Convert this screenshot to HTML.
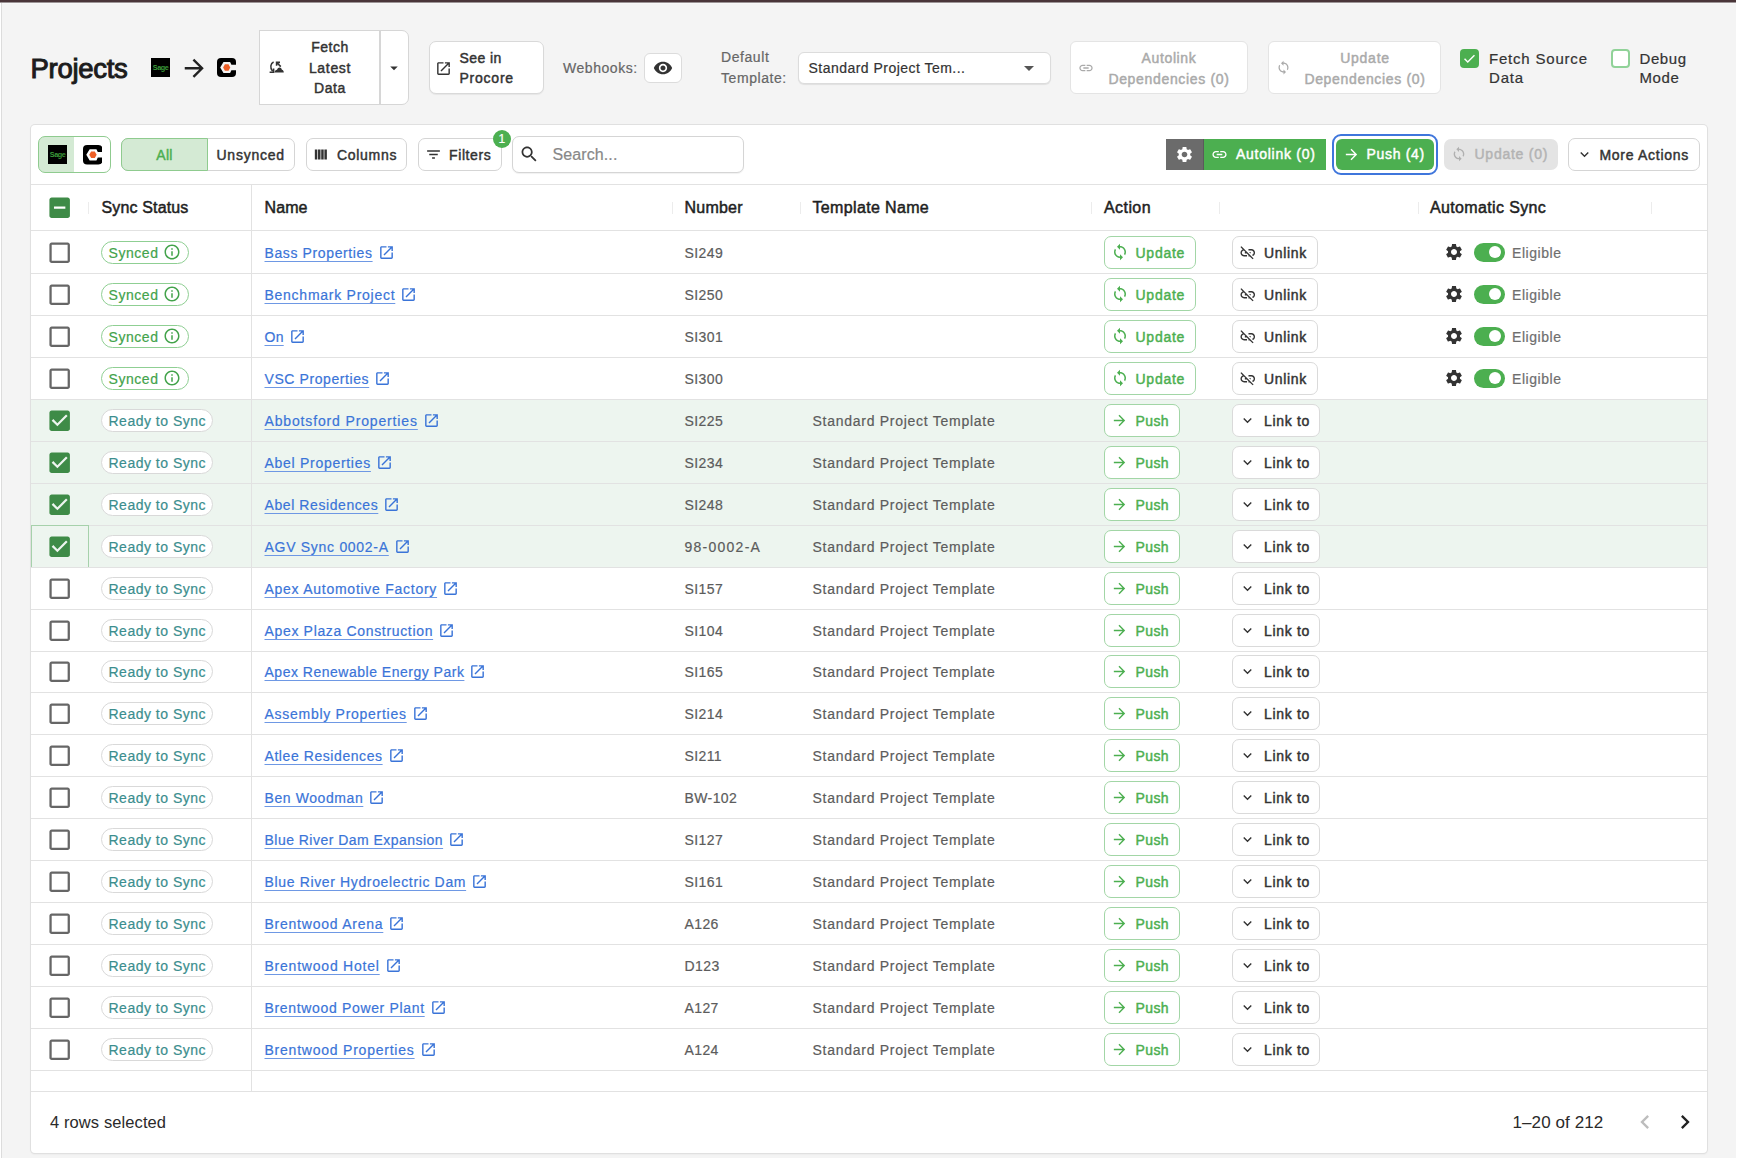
<!DOCTYPE html><html><head><meta charset="utf-8"><style>
html,body{margin:0;padding:0;}
body{width:1740px;height:1162px;position:relative;overflow:hidden;background:#fff;font-family:"Liberation Sans", sans-serif;}
.a{position:absolute;box-sizing:border-box;}
.t{position:absolute;white-space:nowrap;}
svg.a{display:block;}
</style></head><body>
<div class="a" style="left:2px;top:3px;width:1734px;height:1155px;background:#f4f4f4;"></div>
<div class="a" style="left:0px;top:0px;width:1736px;height:2px;background:#4a3539;"></div>
<div class="a" style="left:0px;top:2px;width:1736px;height:1px;background:#9c9496;"></div>
<div class="a" style="left:2px;top:3px;width:1734px;height:1px;background:#f8f8f8;"></div>
<div class="a" style="left:1px;top:3px;width:1px;height:1155px;background:#dcdcdc;"></div>
<div class="t" style="left:30.5px;top:54.72px;font-size:27.5px;line-height:27.5px;color:#1c1c1c;-webkit-text-stroke:0.77px #1c1c1c;letter-spacing:-0.3px;-webkit-text-stroke:1.0px #1c1c1c;">Projects</div>
<svg class="a" style="left:151px;top:58px;" width="19" height="19" viewBox="0 0 19 19"><rect width="19" height="19" fill="#000"/><text x="9.5" y="11.6" text-anchor="middle" font-family="Liberation Sans" font-size="7.2" font-weight="bold" fill="#3a9a3a" letter-spacing="-0.45">Sage</text></svg>
<svg class="a" style="left:179.5px;top:53.5px;" width="28.5" height="28.5" viewBox="0 0 24 24"><path d="M12 4l-1.41 1.41L16.17 11H4v2h12.17l-5.58 5.59L12 20l8-8z" fill="#222"/></svg>
<svg class="a" style="left:217px;top:58px;" width="19" height="19" viewBox="0 0 19 19"><rect width="19" height="19" rx="4" fill="#000"/><polygon points="3.2,9.5 6.5,4.1 13.1,4.1 14.4,6.8 19,6.8 19,12.2 14.4,12.2 13.1,15.0 6.5,15.0" fill="#f4f4f4"/><polygon points="6.1,9.5 7.9,6.3 11.5,6.3 13.3,9.5 11.5,12.7 7.9,12.7" fill="#ee5f26"/></svg>
<div class="a" style="left:259px;top:30px;width:121px;height:75px;background:#fff;border:1px solid #d6d6d6;border-right:none;"></div>
<div class="a" style="left:379px;top:30px;width:30px;height:75px;background:#fff;border:1px solid #d6d6d6;border-radius:0 7px 7px 0;"></div>
<div class="a" style="left:379px;top:30px;width:2px;height:75px;background:#d6d6d6;"></div>
<div class="t" style="left:300px;top:39.65px;font-size:14px;line-height:14px;color:#333;-webkit-text-stroke:0.45px #333;letter-spacing:0.48px;width:60px;text-align:center;">Fetch</div>
<div class="t" style="left:300px;top:60.65px;font-size:14px;line-height:14px;color:#333;-webkit-text-stroke:0.45px #333;letter-spacing:0.68px;width:60px;text-align:center;">Latest</div>
<div class="t" style="left:300px;top:81.15px;font-size:14px;line-height:14px;color:#333;-webkit-text-stroke:0.45px #333;letter-spacing:0.6px;width:60px;text-align:center;">Data</div>
<svg class="a" style="left:269px;top:61px;" width="16" height="13" viewBox="0 0 16 13"><path d="M4.6 1.0 C1.6 2.4 0.6 6.6 3.6 10.2" stroke="#333" stroke-width="1.5" fill="none"/><path d="M0.6 11.2 H4.6 V7.4" stroke="#333" stroke-width="1.6" fill="none"/><path d="M7.6 4.8 V1.4 H11.0 M7.9 1.7 L11.8 5.6" stroke="#333" stroke-width="1.6" fill="none"/><path d="M5.6 11.6 C5.6 9.8 6.8 8.8 8.0 8.7 C8.6 7.3 9.6 6.6 10.4 6.6 C11.6 6.6 12.6 7.4 12.9 8.7 C14.1 8.9 14.8 10.0 14.8 11.6 Z" fill="#333"/></svg>
<svg class="a" style="left:385px;top:58.5px;" width="18" height="18" viewBox="0 0 24 24"><path d="M7 10l5 5 5-5z" fill="#333"/></svg>
<div class="a" style="left:429px;top:41px;width:115px;height:53px;background:#fff;border:1px solid #d9d9d9;border-radius:7px;box-shadow:0 1px 1px rgba(0,0,0,0.06);"></div>
<svg class="a" style="left:435px;top:60px;" width="17" height="17" viewBox="0 0 24 24"><path d="M19 19H5V5h7V3H5c-1.11 0-2 .9-2 2v14c0 1.1.89 2 2 2h14c1.1 0 2-.9 2-2v-7h-2v7zM14 3v2h3.59l-9.83 9.83 1.41 1.41L19 6.41V10h2V3h-7z" fill="#333"/></svg>
<div class="t" style="left:459.5px;top:50.65px;font-size:14px;line-height:14px;color:#333;-webkit-text-stroke:0.45px #333;letter-spacing:0.43px;">See in</div>
<div class="t" style="left:459.5px;top:71.15px;font-size:14px;line-height:14px;color:#333;-webkit-text-stroke:0.45px #333;letter-spacing:0.77px;">Procore</div>
<div class="t" style="left:563px;top:61.15px;font-size:14px;line-height:14px;font-weight:normal;color:#666;letter-spacing:0.55px;-webkit-text-stroke:0.2px #666;">Webhooks:</div>
<div class="a" style="left:644px;top:52.5px;width:38px;height:30px;background:#fff;border:1px solid #dcdcdc;border-radius:6px;"></div>
<svg class="a" style="left:653px;top:58px;" width="20" height="20" viewBox="0 0 24 24"><path d="M12 4.5C7 4.5 2.73 7.61 1 12c1.73 4.39 6 7.5 11 7.5s9.27-3.11 11-7.5c-1.73-4.39-6-7.5-11-7.5zM12 17c-2.76 0-5-2.24-5-5s2.24-5 5-5 5 2.24 5 5-2.24 5-5 5zm0-8c-1.66 0-3 1.34-3 3s1.34 3 3 3 3-1.34 3-3-1.34-3-3-3z" fill="#333"/></svg>
<div class="t" style="left:721px;top:50.35px;font-size:14px;line-height:14px;font-weight:normal;color:#666;letter-spacing:0.57px;-webkit-text-stroke:0.2px #666;">Default</div>
<div class="t" style="left:721px;top:71.15px;font-size:14px;line-height:14px;font-weight:normal;color:#666;letter-spacing:0.57px;-webkit-text-stroke:0.2px #666;">Template:</div>
<div class="a" style="left:798px;top:52px;width:253px;height:32px;background:#fff;border:1px solid #dcdcdc;border-radius:6px;box-shadow:0 1px 1px rgba(0,0,0,0.08);"></div>
<div class="t" style="left:808.5px;top:60.95px;font-size:14px;line-height:14px;font-weight:normal;color:#333;letter-spacing:0.47px;-webkit-text-stroke:0.2px #333;">Standard Project Tem...</div>
<svg class="a" style="left:1017px;top:56px;" width="24" height="24" viewBox="0 0 24 24"><path d="M7 10l5 5 5-5z" fill="#555"/></svg>
<div class="a" style="left:1070px;top:41px;width:178px;height:53px;background:#fff;border:1px solid #e4e4e4;border-radius:6px;"></div>
<svg class="a" style="left:1078px;top:60px;" width="16" height="16" viewBox="0 0 24 24"><path d="M3.9 12c0-1.71 1.39-3.1 3.1-3.1h4V7H7c-2.76 0-5 2.24-5 5s2.24 5 5 5h4v-1.9H7c-1.71 0-3.1-1.39-3.1-3.1zM8 13h8v-2H8v2zm9-6h-4v1.9h4c1.71 0 3.1 1.39 3.1 3.1s-1.39 3.1-3.1 3.1h-4V17h4c2.76 0 5-2.24 5-5s-2.24-5-5-5z" fill="#aaa"/></svg>
<div class="t" style="left:1100px;top:50.95px;font-size:14px;line-height:14px;color:#aaa;-webkit-text-stroke:0.45px #aaa;letter-spacing:0.63px;width:138px;text-align:center;">Autolink</div>
<div class="t" style="left:1100px;top:71.65px;font-size:14px;line-height:14px;color:#aaa;-webkit-text-stroke:0.45px #aaa;letter-spacing:0.67px;width:138px;text-align:center;">Dependencies (0)</div>
<div class="a" style="left:1268px;top:41px;width:173px;height:53px;background:#fff;border:1px solid #e4e4e4;border-radius:6px;"></div>
<svg class="a" style="left:1276px;top:60px;" width="15" height="15" viewBox="0 0 24 24"><path d="M12 4V1L8 5l4 4V6c3.31 0 6 2.69 6 6 0 1.01-.25 1.97-.7 2.8l1.46 1.46C19.54 15.03 20 13.57 20 12c0-4.42-3.58-8-8-8zm0 14c-3.31 0-6-2.69-6-6 0-1.01.25-1.97.7-2.8L5.24 7.74C4.46 8.97 4 10.43 4 12c0 4.42 3.58 8 8 8v3l4-4-4-4v3z" fill="#aaa"/></svg>
<div class="t" style="left:1297px;top:50.95px;font-size:14px;line-height:14px;color:#aaa;-webkit-text-stroke:0.45px #aaa;letter-spacing:0.75px;width:136px;text-align:center;">Update</div>
<div class="t" style="left:1297px;top:71.65px;font-size:14px;line-height:14px;color:#aaa;-webkit-text-stroke:0.45px #aaa;letter-spacing:0.67px;width:136px;text-align:center;">Dependencies (0)</div>
<div class="a" style="left:1460px;top:49px;width:19px;height:19px;background:#4caf50;border-radius:4px;"></div>
<svg class="a" style="left:1461px;top:50px;" width="17" height="17" viewBox="0 0 24 24"><path d="M5 12.5 L9.5 17 L19 7.5" stroke="#fff" stroke-width="2" fill="none"/></svg>
<div class="t" style="left:1489px;top:50.60px;font-size:15px;line-height:15px;font-weight:normal;color:#333;letter-spacing:0.8px;-webkit-text-stroke:0.2px #333;">Fetch Source</div>
<div class="t" style="left:1489px;top:69.60px;font-size:15px;line-height:15px;font-weight:normal;color:#333;letter-spacing:0.8px;-webkit-text-stroke:0.2px #333;">Data</div>
<div class="a" style="left:1611px;top:49px;width:18.5px;height:19px;background:#fff;border:2px solid #90d298;border-radius:4px;"></div>
<div class="t" style="left:1639.5px;top:50.60px;font-size:15px;line-height:15px;font-weight:normal;color:#333;letter-spacing:0.6px;-webkit-text-stroke:0.2px #333;">Debug</div>
<div class="t" style="left:1639.5px;top:69.60px;font-size:15px;line-height:15px;font-weight:normal;color:#333;letter-spacing:0.6px;-webkit-text-stroke:0.2px #333;">Mode</div>
<div class="a" style="left:31px;top:125px;width:1676px;height:1028px;background:#fff;border-radius:4px;box-shadow:0 0 0 1px #e0e0e0, 0 1px 2px rgba(0,0,0,0.10);"></div>
<div class="a" style="left:38px;top:136px;width:73px;height:37px;background:linear-gradient(to right,#d4ead4 35px,#fff 35px);border:1px solid #8fcb8f;border-radius:7px;"></div>
<svg class="a" style="left:48px;top:145px;" width="19" height="19" viewBox="0 0 19 19"><rect width="19" height="19" fill="#000"/><text x="9.5" y="11.6" text-anchor="middle" font-family="Liberation Sans" font-size="7.2" font-weight="bold" fill="#3a9a3a" letter-spacing="-0.45">Sage</text></svg>
<svg class="a" style="left:82.5px;top:145px;" width="19.5" height="19.5" viewBox="0 0 19 19"><rect width="19" height="19" rx="4" fill="#000"/><polygon points="3.2,9.5 6.5,4.1 13.1,4.1 14.4,6.8 19,6.8 19,12.2 14.4,12.2 13.1,15.0 6.5,15.0" fill="#fff"/><polygon points="6.1,9.5 7.9,6.3 11.5,6.3 13.3,9.5 11.5,12.7 7.9,12.7" fill="#ee5f26"/></svg>
<div class="a" style="left:121px;top:138px;width:174px;height:33px;background:#fff;border:1px solid #d5d5d5;border-radius:7px;"></div>
<div class="a" style="left:121px;top:138px;width:87px;height:33px;background:#d4ead4;border:1px solid #8fcb8f;border-radius:7px 0 0 7px;"></div>
<div class="t" style="left:121px;top:147.65px;font-size:14px;line-height:14px;color:#4caf50;-webkit-text-stroke:0.45px #4caf50;letter-spacing:0.33px;width:87px;text-align:center;">All</div>
<div class="t" style="left:216.5px;top:147.65px;font-size:14px;line-height:14px;color:#333;-webkit-text-stroke:0.45px #333;letter-spacing:0.75px;">Unsynced</div>
<div class="a" style="left:306px;top:138px;width:101px;height:33px;background:#fff;border:1px solid #d5d5d5;border-radius:7px;"></div>
<svg class="a" style="left:312.2px;top:145.9px;" width="17" height="17" viewBox="0 0 24 24"><path d="M4 5h3.5v14H4zM8.5 5H12v14H8.5zM13 5h3.5v14H13zM17.5 5H21v14h-3.5z" fill="#333"/></svg>
<div class="t" style="left:337px;top:147.65px;font-size:14px;line-height:14px;color:#333;-webkit-text-stroke:0.45px #333;letter-spacing:0.69px;">Columns</div>
<div class="a" style="left:417.5px;top:138px;width:84px;height:33px;background:#fff;border:1px solid #d5d5d5;border-radius:7px;"></div>
<svg class="a" style="left:424.9px;top:145.7px;" width="17" height="17" viewBox="0 0 24 24"><path d="M10 18h4v-2h-4v2zM3 6v2h18V6H3zm3 7h12v-2H6v2z" fill="#333"/></svg>
<div class="t" style="left:449px;top:147.65px;font-size:14px;line-height:14px;color:#333;-webkit-text-stroke:0.45px #333;letter-spacing:0.61px;">Filters</div>
<div class="a" style="left:492.5px;top:129.5px;width:18.5px;height:18.5px;background:#4caf50;border-radius:50%;"></div>
<div class="t" style="left:492.5px;top:133.14px;font-size:12px;line-height:12px;font-weight:normal;color:#fff;letter-spacing:0px;-webkit-text-stroke:0.2px #fff;width:18.5px;text-align:center;">1</div>
<div class="a" style="left:512px;top:136px;width:232px;height:37px;background:#fff;border:1px solid #d5d5d5;border-radius:7px;box-shadow:0 1px 1px rgba(0,0,0,0.06);"></div>
<svg class="a" style="left:519.4px;top:144.2px;" width="20.5" height="20.5" viewBox="0 0 24 24"><path d="M15.5 14h-.79l-.28-.27C15.41 12.59 16 11.11 16 9.5 16 5.91 13.09 3 9.5 3S3 5.910 3 9.5 5.91 16 9.5 16c1.61 0 3.09-.59 4.23-1.57l.27.28v.79l5 4.99L20.49 19l-4.99-5zm-6 0C7.01 14 5 11.99 5 9.5S7.01 5 9.5 5 14 7.01 14 9.5 11.99 14 9.5 14z" fill="#333"/></svg>
<div class="t" style="left:552.5px;top:146.96px;font-size:16px;line-height:16px;font-weight:normal;color:#888;letter-spacing:0.1px;-webkit-text-stroke:0.2px #888;">Search...</div>
<div class="a" style="left:1166px;top:139px;width:38px;height:31px;background:#6b6b6b;border-right:1px solid #5a5a5a;"></div>
<svg class="a" style="left:1175px;top:145px;" width="19" height="19" viewBox="0 0 24 24"><path d="M19.14 12.94c.04-.3.06-.61.06-.94 0-.32-.02-.64-.07-.94l2.03-1.58c.18-.14.23-.41.12-.61l-1.92-3.32c-.12-.22-.37-.29-.59-.22l-2.39.96c-.5-.38-1.03-.7-1.62-.94l-.36-2.54c-.04-.24-.24-.41-.48-.41h-3.84c-.24 0-.43.17-.47.41l-.36 2.54c-.59.24-1.13.57-1.62.94l-2.39-.96c-.22-.08-.47 0-.59.22L2.74 8.87c-.12.21-.08.47.12.61l2.03 1.58c-.05.3-.09.63-.09.94s.02.64.07.94l-2.03 1.58c-.18.14-.23.41-.12.61l1.92 3.32c.12.22.37.29.59.22l2.39-.96c.5.38 1.03.7 1.62.94l.36 2.54c.05.24.24.41.48.41h3.840c.24 0 .44-.17.47-.41l.36-2.54c.59-.24 1.13-.56 1.62-.94l2.39.96c.22.08.47 0 .59-.22l1.92-3.32c.12-.22.07-.47-.12-.61l-2.01-1.58zM12 15.6c-1.98 0-3.6-1.62-3.6-3.6s1.62-3.6 3.6-3.6 3.6 1.62 3.6 3.6-1.62 3.6-3.6 3.6z" fill="#fff"/></svg>
<div class="a" style="left:1204px;top:139px;width:122px;height:31px;background:#4caf50;"></div>
<svg class="a" style="left:1211px;top:146px;" width="17" height="17" viewBox="0 0 24 24"><path d="M3.9 12c0-1.71 1.39-3.1 3.1-3.1h4V7H7c-2.76 0-5 2.24-5 5s2.24 5 5 5h4v-1.9H7c-1.71 0-3.1-1.39-3.1-3.1zM8 13h8v-2H8v2zm9-6h-4v1.9h4c1.71 0 3.1 1.39 3.1 3.1s-1.39 3.1-3.1 3.1h-4V17h4c2.76 0 5-2.24 5-5s-2.24-5-5-5z" fill="#fff"/></svg>
<div class="t" style="left:1236px;top:147.45px;font-size:14px;line-height:14px;color:#fff;-webkit-text-stroke:0.45px #fff;letter-spacing:0.73px;">Autolink (0)</div>
<div class="a" style="left:1331.5px;top:133.5px;width:106.5px;height:41.5px;border:2px solid #3f76dc;border-radius:9px;"></div>
<div class="a" style="left:1336px;top:139px;width:98px;height:31px;background:#4caf50;border-radius:6px;"></div>
<svg class="a" style="left:1343px;top:146px;" width="17" height="17" viewBox="0 0 24 24"><path d="M12 4l-1.41 1.41L16.17 11H4v2h12.17l-5.58 5.59L12 20l8-8z" fill="#fff"/></svg>
<div class="t" style="left:1366.5px;top:147.45px;font-size:14px;line-height:14px;color:#fff;-webkit-text-stroke:0.45px #fff;letter-spacing:0.68px;">Push (4)</div>
<div class="a" style="left:1444px;top:139px;width:114px;height:31px;background:#e4e4e4;border-radius:7px;"></div>
<svg class="a" style="left:1451px;top:146px;" width="16" height="16" viewBox="0 0 24 24"><path d="M12 4V1L8 5l4 4V6c3.31 0 6 2.69 6 6 0 1.01-.25 1.97-.7 2.8l1.46 1.46C19.54 15.03 20 13.57 20 12c0-4.42-3.58-8-8-8zm0 14c-3.31 0-6-2.69-6-6 0-1.01.25-1.97.7-2.8L5.24 7.74C4.46 8.97 4 10.43 4 12c0 4.42 3.58 8 8 8v3l4-4-4-4v3z" fill="#b0b0b0"/></svg>
<div class="t" style="left:1474.5px;top:147.45px;font-size:14px;line-height:14px;color:#b3b3b3;-webkit-text-stroke:0.45px #b3b3b3;letter-spacing:0.75px;">Update (0)</div>
<div class="a" style="left:1568px;top:138px;width:132px;height:33px;background:#fff;border:1px solid #d5d5d5;border-radius:7px;"></div>
<svg class="a" style="left:1576px;top:146px;" width="17" height="17" viewBox="0 0 24 24"><path d="M16.59 8.59L12 13.17 7.41 8.59 6 10l6 6 6-6z" fill="#333"/></svg>
<div class="t" style="left:1599.5px;top:147.65px;font-size:14px;line-height:14px;color:#333;-webkit-text-stroke:0.45px #333;letter-spacing:0.71px;">More Actions</div>
<div class="a" style="left:31px;top:184px;width:1676px;height:1px;background:#e2e2e2;"></div>
<svg class="a" style="left:46.18333333333334px;top:193.58333333333334px;" width="27.333333333333332" height="27.333333333333332" viewBox="0 0 24 24"><path d="M19 3H5c-1.1 0-2 .9-2 2v14c0 1.1.9 2 2 2h14c1.1 0 2-.9 2-2V5c0-1.1-.9-2-2-2zm-2 10H7v-2h10v2z" fill="#3e8b47"/></svg>
<div class="a" style="left:88px;top:202px;width:1px;height:12px;background:#ececec;"></div>
<div class="a" style="left:672px;top:202px;width:1px;height:12px;background:#ececec;"></div>
<div class="a" style="left:800px;top:202px;width:1px;height:12px;background:#ececec;"></div>
<div class="a" style="left:1091px;top:202px;width:1px;height:12px;background:#ececec;"></div>
<div class="a" style="left:1219px;top:202px;width:1px;height:12px;background:#ececec;"></div>
<div class="a" style="left:1418px;top:202px;width:1px;height:12px;background:#ececec;"></div>
<div class="a" style="left:1651px;top:202px;width:1px;height:12px;background:#ececec;"></div>
<div class="t" style="left:101.5px;top:200.46px;font-size:16px;line-height:16px;color:#1f1f1f;-webkit-text-stroke:0.5px #1f1f1f;letter-spacing:0.15px;">Sync Status</div>
<div class="t" style="left:264.5px;top:200.46px;font-size:16px;line-height:16px;color:#1f1f1f;-webkit-text-stroke:0.5px #1f1f1f;letter-spacing:0.1px;">Name</div>
<div class="t" style="left:684.5px;top:200.46px;font-size:16px;line-height:16px;color:#1f1f1f;-webkit-text-stroke:0.5px #1f1f1f;letter-spacing:0.23px;">Number</div>
<div class="t" style="left:812.5px;top:200.46px;font-size:16px;line-height:16px;color:#1f1f1f;-webkit-text-stroke:0.5px #1f1f1f;letter-spacing:0.35px;">Template Name</div>
<div class="t" style="left:1104px;top:200.46px;font-size:16px;line-height:16px;color:#1f1f1f;-webkit-text-stroke:0.5px #1f1f1f;letter-spacing:0.42px;">Action</div>
<div class="t" style="left:1430px;top:200.46px;font-size:16px;line-height:16px;color:#1f1f1f;-webkit-text-stroke:0.5px #1f1f1f;letter-spacing:0.36px;">Automatic Sync</div>
<div class="a" style="left:31px;top:230px;width:1676px;height:1px;background:#e2e2e2;"></div>
<div class="a" style="left:31px;top:273px;width:1676px;height:1px;background:#e2e2e2;"></div>
<svg class="a" style="left:46.18333333333334px;top:238.58333333333334px;" width="27.333333333333332" height="27.333333333333332" viewBox="0 0 24 24"><path d="M19 5v14H5V5h14m0-2H5c-1.1 0-2 .9-2 2v14c0 1.1.9 2 2 2h14c1.1 0 2-.9 2-2V5c0-1.1-.9-2-2-2z" fill="#666"/></svg>
<div class="a" style="left:101px;top:240.5px;width:87.5px;height:23.5px;border:1px solid #8fcf93;border-radius:12px;"></div>
<div class="t" style="left:108.5px;top:245.75px;font-size:14px;line-height:14px;font-weight:normal;color:#43a34b;letter-spacing:0.55px;-webkit-text-stroke:0.2px #43a34b;">Synced</div>
<svg class="a" style="left:162.5px;top:243px;" width="18" height="18" viewBox="0 0 24 24"><path d="M11 7h2v2h-2zm0 4h2v6h-2zm1-9C6.48 2 2 6.48 2 12s4.48 10 10 10 10-4.48 10-10S17.52 2 12 2zm0 18c-4.41 0-8-3.59-8-8s3.59-8 8-8 8 3.59 8 8-3.59 8-8 8z" fill="#43a34b"/></svg>
<div class="t" style="left:264.5px;top:245.75px;font-size:14px;line-height:14px;font-weight:normal;color:#3a74d8;letter-spacing:0.618px;-webkit-text-stroke:0.2px #3a74d8;"><span style="text-decoration:underline;text-decoration-color:#6e98e4;text-underline-offset:2.5px;text-decoration-thickness:1.2px;text-decoration-skip-ink:none;">Bass Properties</span><span style="position:relative;display:inline-block;width:22px;height:1px;"><svg width="17" height="17" viewBox="0 0 24 24" style="position:absolute;left:5px;top:-13px;"><path d="M19 19H5V5h7V3H5c-1.11 0-2 .9-2 2v14c0 1.1.89 2 2 2h14c1.1 0 2-.9 2-2v-7h-2v7zM14 3v2h3.59l-9.83 9.83 1.41 1.41L19 6.41V10h2V3h-7z" fill="#3a74d8"/></svg></span></div>
<div class="t" style="left:684.5px;top:245.75px;font-size:14px;line-height:14px;font-weight:normal;color:#5c5c5c;letter-spacing:0.4px;-webkit-text-stroke:0.2px #5c5c5c;">SI249</div>
<div class="a" style="left:1103.5px;top:236px;width:92.5px;height:32.5px;border:1px solid #a2d6a6;border-radius:7px;background:#fff;"></div>
<svg class="a" style="left:1111px;top:243px;" width="18" height="18" viewBox="0 0 24 24"><path d="M12 4V1L8 5l4 4V6c3.31 0 6 2.69 6 6 0 1.01-.25 1.97-.7 2.8l1.46 1.46C19.54 15.03 20 13.57 20 12c0-4.42-3.58-8-8-8zm0 14c-3.31 0-6-2.69-6-6 0-1.01.25-1.97.7-2.8L5.24 7.74C4.46 8.97 4 10.43 4 12c0 4.42 3.58 8 8 8v3l4-4-4-4v3z" fill="#4caf50"/></svg>
<div class="t" style="left:1135.5px;top:245.75px;font-size:14px;line-height:14px;color:#4caf50;-webkit-text-stroke:0.45px #4caf50;letter-spacing:0.75px;">Update</div>
<div class="a" style="left:1231.5px;top:236px;width:86px;height:32.5px;border:1px solid #dadada;border-radius:7px;background:#fff;"></div>
<svg class="a" style="left:1239px;top:243.5px;" width="17.5" height="17.5" viewBox="0 0 24 24"><path d="M17 7h-4v1.9h4c1.71 0 3.1 1.39 3.1 3.1 0 1.43-.98 2.63-2.31 2.98l1.46 1.46C20.88 15.61 22 13.95 22 12c0-2.76-2.24-5-5-5zm-1 4h-2.19l2 2H16zM2 4.27l3.11 3.11C3.29 8.12 2 9.91 2 12c0 2.76 2.24 5 5 5h4v-1.9H7c-1.71 0-3.1-1.39-3.1-3.1 0-1.59 1.21-2.9 2.76-3.07L8.73 11H8v2h2.73L13 15.27V17h1.73l4.01 4L20 19.74 3.27 3 2 4.27z" fill="#333"/></svg>
<div class="t" style="left:1264px;top:245.75px;font-size:14px;line-height:14px;color:#333;-webkit-text-stroke:0.45px #333;letter-spacing:0.68px;">Unlink</div>
<svg class="a" style="left:1444px;top:242px;" width="20" height="20" viewBox="0 0 24 24"><path d="M19.14 12.94c.04-.3.06-.61.06-.94 0-.32-.02-.64-.07-.94l2.03-1.58c.18-.14.23-.41.12-.61l-1.92-3.32c-.12-.22-.37-.29-.59-.22l-2.39.96c-.5-.38-1.03-.7-1.62-.94l-.36-2.54c-.04-.24-.24-.41-.48-.41h-3.84c-.24 0-.43.17-.47.41l-.36 2.54c-.59.24-1.13.57-1.62.94l-2.39-.96c-.22-.08-.47 0-.59.22L2.74 8.87c-.12.21-.08.47.12.61l2.03 1.58c-.05.3-.09.63-.09.94s.02.64.07.94l-2.03 1.58c-.18.14-.23.41-.12.61l1.92 3.32c.12.22.37.29.59.22l2.39-.96c.5.38 1.03.7 1.62.94l.36 2.54c.05.24.24.41.48.41h3.840c.24 0 .44-.17.47-.41l.36-2.54c.59-.24 1.13-.56 1.62-.94l2.39.96c.22.08.47 0 .59-.22l1.92-3.32c.12-.22.07-.47-.12-.61l-2.01-1.58zM12 15.6c-1.98 0-3.6-1.62-3.6-3.6s1.62-3.6 3.6-3.6 3.6 1.62 3.6 3.6-1.62 3.6-3.6 3.6z" fill="#333"/></svg>
<div class="a" style="left:1474px;top:242.5px;width:30.5px;height:19px;background:#4caf50;border-radius:10px;"></div>
<div class="a" style="left:1489px;top:246px;width:12px;height:12px;background:#fff;border-radius:50%;"></div>
<div class="t" style="left:1512px;top:245.75px;font-size:14px;line-height:14px;font-weight:normal;color:#6e6e6e;letter-spacing:0.56px;-webkit-text-stroke:0.2px #6e6e6e;">Eligible</div>
<div class="a" style="left:31px;top:315px;width:1676px;height:1px;background:#e2e2e2;"></div>
<svg class="a" style="left:46.18333333333334px;top:280.5833333333333px;" width="27.333333333333332" height="27.333333333333332" viewBox="0 0 24 24"><path d="M19 5v14H5V5h14m0-2H5c-1.1 0-2 .9-2 2v14c0 1.1.9 2 2 2h14c1.1 0 2-.9 2-2V5c0-1.1-.9-2-2-2z" fill="#666"/></svg>
<div class="a" style="left:101px;top:282.5px;width:87.5px;height:23.5px;border:1px solid #8fcf93;border-radius:12px;"></div>
<div class="t" style="left:108.5px;top:287.75px;font-size:14px;line-height:14px;font-weight:normal;color:#43a34b;letter-spacing:0.55px;-webkit-text-stroke:0.2px #43a34b;">Synced</div>
<svg class="a" style="left:162.5px;top:285px;" width="18" height="18" viewBox="0 0 24 24"><path d="M11 7h2v2h-2zm0 4h2v6h-2zm1-9C6.48 2 2 6.48 2 12s4.48 10 10 10 10-4.48 10-10S17.52 2 12 2zm0 18c-4.41 0-8-3.59-8-8s3.59-8 8-8 8 3.59 8 8-3.59 8-8 8z" fill="#43a34b"/></svg>
<div class="t" style="left:264.5px;top:287.75px;font-size:14px;line-height:14px;font-weight:normal;color:#3a74d8;letter-spacing:0.736px;-webkit-text-stroke:0.2px #3a74d8;"><span style="text-decoration:underline;text-decoration-color:#6e98e4;text-underline-offset:2.5px;text-decoration-thickness:1.2px;text-decoration-skip-ink:none;">Benchmark Project</span><span style="position:relative;display:inline-block;width:22px;height:1px;"><svg width="17" height="17" viewBox="0 0 24 24" style="position:absolute;left:5px;top:-13px;"><path d="M19 19H5V5h7V3H5c-1.11 0-2 .9-2 2v14c0 1.1.89 2 2 2h14c1.1 0 2-.9 2-2v-7h-2v7zM14 3v2h3.59l-9.83 9.83 1.41 1.41L19 6.41V10h2V3h-7z" fill="#3a74d8"/></svg></span></div>
<div class="t" style="left:684.5px;top:287.75px;font-size:14px;line-height:14px;font-weight:normal;color:#5c5c5c;letter-spacing:0.4px;-webkit-text-stroke:0.2px #5c5c5c;">SI250</div>
<div class="a" style="left:1103.5px;top:278px;width:92.5px;height:32.5px;border:1px solid #a2d6a6;border-radius:7px;background:#fff;"></div>
<svg class="a" style="left:1111px;top:285px;" width="18" height="18" viewBox="0 0 24 24"><path d="M12 4V1L8 5l4 4V6c3.31 0 6 2.69 6 6 0 1.01-.25 1.97-.7 2.8l1.46 1.46C19.54 15.03 20 13.57 20 12c0-4.42-3.58-8-8-8zm0 14c-3.31 0-6-2.69-6-6 0-1.01.25-1.97.7-2.8L5.24 7.74C4.46 8.97 4 10.43 4 12c0 4.42 3.58 8 8 8v3l4-4-4-4v3z" fill="#4caf50"/></svg>
<div class="t" style="left:1135.5px;top:287.75px;font-size:14px;line-height:14px;color:#4caf50;-webkit-text-stroke:0.45px #4caf50;letter-spacing:0.75px;">Update</div>
<div class="a" style="left:1231.5px;top:278px;width:86px;height:32.5px;border:1px solid #dadada;border-radius:7px;background:#fff;"></div>
<svg class="a" style="left:1239px;top:285.5px;" width="17.5" height="17.5" viewBox="0 0 24 24"><path d="M17 7h-4v1.9h4c1.71 0 3.1 1.39 3.1 3.1 0 1.43-.98 2.63-2.31 2.98l1.46 1.46C20.88 15.61 22 13.95 22 12c0-2.76-2.24-5-5-5zm-1 4h-2.19l2 2H16zM2 4.27l3.11 3.11C3.29 8.12 2 9.91 2 12c0 2.76 2.24 5 5 5h4v-1.9H7c-1.71 0-3.1-1.39-3.1-3.1 0-1.59 1.21-2.9 2.76-3.07L8.73 11H8v2h2.73L13 15.27V17h1.73l4.01 4L20 19.74 3.27 3 2 4.27z" fill="#333"/></svg>
<div class="t" style="left:1264px;top:287.75px;font-size:14px;line-height:14px;color:#333;-webkit-text-stroke:0.45px #333;letter-spacing:0.68px;">Unlink</div>
<svg class="a" style="left:1444px;top:284px;" width="20" height="20" viewBox="0 0 24 24"><path d="M19.14 12.94c.04-.3.06-.61.06-.94 0-.32-.02-.64-.07-.94l2.03-1.58c.18-.14.23-.41.12-.61l-1.92-3.32c-.12-.22-.37-.29-.59-.22l-2.39.96c-.5-.38-1.03-.7-1.62-.94l-.36-2.54c-.04-.24-.24-.41-.48-.41h-3.84c-.24 0-.43.17-.47.41l-.36 2.54c-.59.24-1.13.57-1.62.94l-2.39-.96c-.22-.08-.47 0-.59.22L2.74 8.87c-.12.21-.08.47.12.61l2.03 1.58c-.05.3-.09.63-.09.94s.02.64.07.94l-2.03 1.58c-.18.14-.23.41-.12.61l1.92 3.32c.12.22.37.29.59.22l2.39-.96c.5.38 1.03.7 1.62.94l.36 2.54c.05.24.24.41.48.41h3.840c.24 0 .44-.17.47-.41l.36-2.54c.59-.24 1.13-.56 1.62-.94l2.39.96c.22.08.47 0 .59-.22l1.92-3.32c.12-.22.07-.47-.12-.61l-2.01-1.58zM12 15.6c-1.98 0-3.6-1.62-3.6-3.6s1.62-3.6 3.6-3.6 3.6 1.62 3.6 3.6-1.62 3.6-3.6 3.6z" fill="#333"/></svg>
<div class="a" style="left:1474px;top:284.5px;width:30.5px;height:19px;background:#4caf50;border-radius:10px;"></div>
<div class="a" style="left:1489px;top:288px;width:12px;height:12px;background:#fff;border-radius:50%;"></div>
<div class="t" style="left:1512px;top:287.75px;font-size:14px;line-height:14px;font-weight:normal;color:#6e6e6e;letter-spacing:0.56px;-webkit-text-stroke:0.2px #6e6e6e;">Eligible</div>
<div class="a" style="left:31px;top:357px;width:1676px;height:1px;background:#e2e2e2;"></div>
<svg class="a" style="left:46.18333333333334px;top:322.5833333333333px;" width="27.333333333333332" height="27.333333333333332" viewBox="0 0 24 24"><path d="M19 5v14H5V5h14m0-2H5c-1.1 0-2 .9-2 2v14c0 1.1.9 2 2 2h14c1.1 0 2-.9 2-2V5c0-1.1-.9-2-2-2z" fill="#666"/></svg>
<div class="a" style="left:101px;top:324.5px;width:87.5px;height:23.5px;border:1px solid #8fcf93;border-radius:12px;"></div>
<div class="t" style="left:108.5px;top:329.75px;font-size:14px;line-height:14px;font-weight:normal;color:#43a34b;letter-spacing:0.55px;-webkit-text-stroke:0.2px #43a34b;">Synced</div>
<svg class="a" style="left:162.5px;top:327px;" width="18" height="18" viewBox="0 0 24 24"><path d="M11 7h2v2h-2zm0 4h2v6h-2zm1-9C6.48 2 2 6.48 2 12s4.48 10 10 10 10-4.48 10-10S17.52 2 12 2zm0 18c-4.41 0-8-3.59-8-8s3.59-8 8-8 8 3.59 8 8-3.59 8-8 8z" fill="#43a34b"/></svg>
<div class="t" style="left:264.5px;top:329.75px;font-size:14px;line-height:14px;font-weight:normal;color:#3a74d8;letter-spacing:0.256px;-webkit-text-stroke:0.2px #3a74d8;"><span style="text-decoration:underline;text-decoration-color:#6e98e4;text-underline-offset:2.5px;text-decoration-thickness:1.2px;text-decoration-skip-ink:none;">On</span><span style="position:relative;display:inline-block;width:22px;height:1px;"><svg width="17" height="17" viewBox="0 0 24 24" style="position:absolute;left:5px;top:-13px;"><path d="M19 19H5V5h7V3H5c-1.11 0-2 .9-2 2v14c0 1.1.89 2 2 2h14c1.1 0 2-.9 2-2v-7h-2v7zM14 3v2h3.59l-9.83 9.83 1.41 1.41L19 6.41V10h2V3h-7z" fill="#3a74d8"/></svg></span></div>
<div class="t" style="left:684.5px;top:329.75px;font-size:14px;line-height:14px;font-weight:normal;color:#5c5c5c;letter-spacing:0.4px;-webkit-text-stroke:0.2px #5c5c5c;">SI301</div>
<div class="a" style="left:1103.5px;top:320px;width:92.5px;height:32.5px;border:1px solid #a2d6a6;border-radius:7px;background:#fff;"></div>
<svg class="a" style="left:1111px;top:327px;" width="18" height="18" viewBox="0 0 24 24"><path d="M12 4V1L8 5l4 4V6c3.31 0 6 2.69 6 6 0 1.01-.25 1.97-.7 2.8l1.46 1.46C19.54 15.03 20 13.57 20 12c0-4.42-3.58-8-8-8zm0 14c-3.31 0-6-2.69-6-6 0-1.01.25-1.97.7-2.8L5.24 7.74C4.46 8.97 4 10.43 4 12c0 4.42 3.58 8 8 8v3l4-4-4-4v3z" fill="#4caf50"/></svg>
<div class="t" style="left:1135.5px;top:329.75px;font-size:14px;line-height:14px;color:#4caf50;-webkit-text-stroke:0.45px #4caf50;letter-spacing:0.75px;">Update</div>
<div class="a" style="left:1231.5px;top:320px;width:86px;height:32.5px;border:1px solid #dadada;border-radius:7px;background:#fff;"></div>
<svg class="a" style="left:1239px;top:327.5px;" width="17.5" height="17.5" viewBox="0 0 24 24"><path d="M17 7h-4v1.9h4c1.71 0 3.1 1.39 3.1 3.1 0 1.43-.98 2.63-2.31 2.98l1.46 1.46C20.88 15.61 22 13.95 22 12c0-2.76-2.24-5-5-5zm-1 4h-2.19l2 2H16zM2 4.27l3.11 3.11C3.29 8.12 2 9.91 2 12c0 2.76 2.24 5 5 5h4v-1.9H7c-1.71 0-3.1-1.39-3.1-3.1 0-1.59 1.21-2.9 2.76-3.07L8.73 11H8v2h2.73L13 15.27V17h1.73l4.01 4L20 19.74 3.27 3 2 4.27z" fill="#333"/></svg>
<div class="t" style="left:1264px;top:329.75px;font-size:14px;line-height:14px;color:#333;-webkit-text-stroke:0.45px #333;letter-spacing:0.68px;">Unlink</div>
<svg class="a" style="left:1444px;top:326px;" width="20" height="20" viewBox="0 0 24 24"><path d="M19.14 12.94c.04-.3.06-.61.06-.94 0-.32-.02-.64-.07-.94l2.03-1.58c.18-.14.23-.41.12-.61l-1.92-3.32c-.12-.22-.37-.29-.59-.22l-2.39.96c-.5-.38-1.03-.7-1.62-.94l-.36-2.54c-.04-.24-.24-.41-.48-.41h-3.84c-.24 0-.43.17-.47.41l-.36 2.54c-.59.24-1.13.57-1.62.94l-2.39-.96c-.22-.08-.47 0-.59.22L2.74 8.87c-.12.21-.08.47.12.61l2.03 1.58c-.05.3-.09.63-.09.94s.02.64.07.94l-2.03 1.58c-.18.14-.23.41-.12.61l1.92 3.32c.12.22.37.29.59.22l2.39-.96c.5.38 1.03.7 1.62.94l.36 2.54c.05.24.24.41.48.41h3.840c.24 0 .44-.17.47-.41l.36-2.54c.59-.24 1.13-.56 1.62-.94l2.39.96c.22.08.47 0 .59-.22l1.92-3.32c.12-.22.07-.47-.12-.61l-2.01-1.58zM12 15.6c-1.98 0-3.6-1.62-3.6-3.6s1.62-3.6 3.6-3.6 3.6 1.62 3.6 3.6-1.62 3.6-3.6 3.6z" fill="#333"/></svg>
<div class="a" style="left:1474px;top:326.5px;width:30.5px;height:19px;background:#4caf50;border-radius:10px;"></div>
<div class="a" style="left:1489px;top:330px;width:12px;height:12px;background:#fff;border-radius:50%;"></div>
<div class="t" style="left:1512px;top:329.75px;font-size:14px;line-height:14px;font-weight:normal;color:#6e6e6e;letter-spacing:0.56px;-webkit-text-stroke:0.2px #6e6e6e;">Eligible</div>
<div class="a" style="left:31px;top:399px;width:1676px;height:1px;background:#e2e2e2;"></div>
<svg class="a" style="left:46.18333333333334px;top:364.5833333333333px;" width="27.333333333333332" height="27.333333333333332" viewBox="0 0 24 24"><path d="M19 5v14H5V5h14m0-2H5c-1.1 0-2 .9-2 2v14c0 1.1.9 2 2 2h14c1.1 0 2-.9 2-2V5c0-1.1-.9-2-2-2z" fill="#666"/></svg>
<div class="a" style="left:101px;top:366.5px;width:87.5px;height:23.5px;border:1px solid #8fcf93;border-radius:12px;"></div>
<div class="t" style="left:108.5px;top:371.75px;font-size:14px;line-height:14px;font-weight:normal;color:#43a34b;letter-spacing:0.55px;-webkit-text-stroke:0.2px #43a34b;">Synced</div>
<svg class="a" style="left:162.5px;top:369px;" width="18" height="18" viewBox="0 0 24 24"><path d="M11 7h2v2h-2zm0 4h2v6h-2zm1-9C6.48 2 2 6.48 2 12s4.48 10 10 10 10-4.48 10-10S17.52 2 12 2zm0 18c-4.41 0-8-3.59-8-8s3.59-8 8-8 8 3.59 8 8-3.59 8-8 8z" fill="#43a34b"/></svg>
<div class="t" style="left:264.5px;top:371.75px;font-size:14px;line-height:14px;font-weight:normal;color:#3a74d8;letter-spacing:0.587px;-webkit-text-stroke:0.2px #3a74d8;"><span style="text-decoration:underline;text-decoration-color:#6e98e4;text-underline-offset:2.5px;text-decoration-thickness:1.2px;text-decoration-skip-ink:none;">VSC Properties</span><span style="position:relative;display:inline-block;width:22px;height:1px;"><svg width="17" height="17" viewBox="0 0 24 24" style="position:absolute;left:5px;top:-13px;"><path d="M19 19H5V5h7V3H5c-1.11 0-2 .9-2 2v14c0 1.1.89 2 2 2h14c1.1 0 2-.9 2-2v-7h-2v7zM14 3v2h3.59l-9.83 9.83 1.41 1.41L19 6.41V10h2V3h-7z" fill="#3a74d8"/></svg></span></div>
<div class="t" style="left:684.5px;top:371.75px;font-size:14px;line-height:14px;font-weight:normal;color:#5c5c5c;letter-spacing:0.4px;-webkit-text-stroke:0.2px #5c5c5c;">SI300</div>
<div class="a" style="left:1103.5px;top:362px;width:92.5px;height:32.5px;border:1px solid #a2d6a6;border-radius:7px;background:#fff;"></div>
<svg class="a" style="left:1111px;top:369px;" width="18" height="18" viewBox="0 0 24 24"><path d="M12 4V1L8 5l4 4V6c3.31 0 6 2.69 6 6 0 1.01-.25 1.97-.7 2.8l1.46 1.46C19.54 15.03 20 13.57 20 12c0-4.42-3.58-8-8-8zm0 14c-3.31 0-6-2.69-6-6 0-1.01.25-1.97.7-2.8L5.24 7.74C4.46 8.97 4 10.43 4 12c0 4.42 3.58 8 8 8v3l4-4-4-4v3z" fill="#4caf50"/></svg>
<div class="t" style="left:1135.5px;top:371.75px;font-size:14px;line-height:14px;color:#4caf50;-webkit-text-stroke:0.45px #4caf50;letter-spacing:0.75px;">Update</div>
<div class="a" style="left:1231.5px;top:362px;width:86px;height:32.5px;border:1px solid #dadada;border-radius:7px;background:#fff;"></div>
<svg class="a" style="left:1239px;top:369.5px;" width="17.5" height="17.5" viewBox="0 0 24 24"><path d="M17 7h-4v1.9h4c1.71 0 3.1 1.39 3.1 3.1 0 1.43-.98 2.63-2.31 2.98l1.46 1.46C20.88 15.61 22 13.95 22 12c0-2.76-2.24-5-5-5zm-1 4h-2.19l2 2H16zM2 4.27l3.11 3.11C3.29 8.12 2 9.91 2 12c0 2.76 2.24 5 5 5h4v-1.9H7c-1.71 0-3.1-1.39-3.1-3.1 0-1.59 1.21-2.9 2.76-3.07L8.73 11H8v2h2.73L13 15.27V17h1.73l4.01 4L20 19.74 3.27 3 2 4.27z" fill="#333"/></svg>
<div class="t" style="left:1264px;top:371.75px;font-size:14px;line-height:14px;color:#333;-webkit-text-stroke:0.45px #333;letter-spacing:0.68px;">Unlink</div>
<svg class="a" style="left:1444px;top:368px;" width="20" height="20" viewBox="0 0 24 24"><path d="M19.14 12.94c.04-.3.06-.61.06-.94 0-.32-.02-.64-.07-.94l2.03-1.58c.18-.14.23-.41.12-.61l-1.92-3.32c-.12-.22-.37-.29-.59-.22l-2.39.96c-.5-.38-1.03-.7-1.62-.94l-.36-2.54c-.04-.24-.24-.41-.48-.41h-3.84c-.24 0-.43.17-.47.41l-.36 2.54c-.59.24-1.13.57-1.62.94l-2.39-.96c-.22-.08-.47 0-.59.22L2.74 8.87c-.12.21-.08.47.12.61l2.03 1.58c-.05.3-.09.63-.09.94s.02.64.07.94l-2.03 1.58c-.18.14-.23.41-.12.61l1.92 3.32c.12.22.37.29.59.22l2.39-.96c.5.38 1.03.7 1.62.94l.36 2.54c.05.24.24.41.48.41h3.840c.24 0 .44-.17.47-.41l.36-2.54c.59-.24 1.13-.56 1.62-.94l2.39.96c.22.08.47 0 .59-.22l1.92-3.32c.12-.22.07-.47-.12-.61l-2.01-1.58zM12 15.6c-1.98 0-3.6-1.62-3.6-3.6s1.62-3.6 3.6-3.6 3.6 1.62 3.6 3.6-1.62 3.6-3.6 3.6z" fill="#333"/></svg>
<div class="a" style="left:1474px;top:368.5px;width:30.5px;height:19px;background:#4caf50;border-radius:10px;"></div>
<div class="a" style="left:1489px;top:372px;width:12px;height:12px;background:#fff;border-radius:50%;"></div>
<div class="t" style="left:1512px;top:371.75px;font-size:14px;line-height:14px;font-weight:normal;color:#6e6e6e;letter-spacing:0.56px;-webkit-text-stroke:0.2px #6e6e6e;">Eligible</div>
<div class="a" style="left:31px;top:400px;width:1676px;height:41px;background:#edf5ef;"></div>
<div class="a" style="left:31px;top:441px;width:1676px;height:1px;background:#e2e2e2;"></div>
<svg class="a" style="left:46.18333333333334px;top:406.5833333333333px;" width="27.333333333333332" height="27.333333333333332" viewBox="0 0 24 24"><path d="M19 3H5c-1.11 0-2 .9-2 2v14c0 1.1.89 2 2 2h14c1.1 0 2-.9 2-2V5c0-1.1-.89-2-2-2zm-9 14l-5-5 1.41-1.41L10 14.17l7.59-7.59L19 8l-9 9z" fill="#3e8b47"/></svg>
<div class="a" style="left:101px;top:408.5px;width:112px;height:23.5px;border:1px solid #d9d9d9;border-radius:12px;background:#fff;"></div>
<div class="t" style="left:108.5px;top:413.75px;font-size:14px;line-height:14px;font-weight:normal;color:#3b8e8e;letter-spacing:0.5px;-webkit-text-stroke:0.2px #3b8e8e;">Ready to Sync</div>
<div class="t" style="left:264.5px;top:413.75px;font-size:14px;line-height:14px;font-weight:normal;color:#3a74d8;letter-spacing:0.852px;-webkit-text-stroke:0.2px #3a74d8;"><span style="text-decoration:underline;text-decoration-color:#6e98e4;text-underline-offset:2.5px;text-decoration-thickness:1.2px;text-decoration-skip-ink:none;">Abbotsford Properties</span><span style="position:relative;display:inline-block;width:22px;height:1px;"><svg width="17" height="17" viewBox="0 0 24 24" style="position:absolute;left:5px;top:-13px;"><path d="M19 19H5V5h7V3H5c-1.11 0-2 .9-2 2v14c0 1.1.89 2 2 2h14c1.1 0 2-.9 2-2v-7h-2v7zM14 3v2h3.59l-9.83 9.83 1.41 1.41L19 6.41V10h2V3h-7z" fill="#3a74d8"/></svg></span></div>
<div class="t" style="left:684.5px;top:413.75px;font-size:14px;line-height:14px;font-weight:normal;color:#5c5c5c;letter-spacing:0.4px;-webkit-text-stroke:0.2px #5c5c5c;">SI225</div>
<div class="t" style="left:812.5px;top:413.75px;font-size:14px;line-height:14px;font-weight:normal;color:#5c5c5c;letter-spacing:0.73px;-webkit-text-stroke:0.2px #5c5c5c;">Standard Project Template</div>
<div class="a" style="left:1103.5px;top:404px;width:76.5px;height:32.5px;border:1px solid #a2d6a6;border-radius:7px;background:#fff;"></div>
<svg class="a" style="left:1111px;top:411.5px;" width="17" height="17" viewBox="0 0 24 24"><path d="M12 4l-1.41 1.41L16.17 11H4v2h12.17l-5.58 5.59L12 20l8-8z" fill="#4caf50"/></svg>
<div class="t" style="left:1135.5px;top:413.75px;font-size:14px;line-height:14px;color:#4caf50;-webkit-text-stroke:0.45px #4caf50;letter-spacing:0.4px;">Push</div>
<div class="a" style="left:1231.5px;top:404px;width:88.5px;height:32.5px;border:1px solid #dadada;border-radius:7px;background:#fff;"></div>
<svg class="a" style="left:1239px;top:411.5px;" width="17" height="17" viewBox="0 0 24 24"><path d="M16.59 8.59L12 13.17 7.41 8.59 6 10l6 6 6-6z" fill="#333"/></svg>
<div class="t" style="left:1264px;top:413.75px;font-size:14px;line-height:14px;color:#333;-webkit-text-stroke:0.45px #333;letter-spacing:0.69px;">Link to</div>
<div class="a" style="left:31px;top:442px;width:1676px;height:41px;background:#edf5ef;"></div>
<div class="a" style="left:31px;top:483px;width:1676px;height:1px;background:#e2e2e2;"></div>
<svg class="a" style="left:46.18333333333334px;top:448.5833333333333px;" width="27.333333333333332" height="27.333333333333332" viewBox="0 0 24 24"><path d="M19 3H5c-1.11 0-2 .9-2 2v14c0 1.1.89 2 2 2h14c1.1 0 2-.9 2-2V5c0-1.1-.89-2-2-2zm-9 14l-5-5 1.41-1.41L10 14.17l7.59-7.59L19 8l-9 9z" fill="#3e8b47"/></svg>
<div class="a" style="left:101px;top:450.5px;width:112px;height:23.5px;border:1px solid #d9d9d9;border-radius:12px;background:#fff;"></div>
<div class="t" style="left:108.5px;top:455.75px;font-size:14px;line-height:14px;font-weight:normal;color:#3b8e8e;letter-spacing:0.5px;-webkit-text-stroke:0.2px #3b8e8e;">Ready to Sync</div>
<div class="t" style="left:264.5px;top:455.75px;font-size:14px;line-height:14px;font-weight:normal;color:#3a74d8;letter-spacing:0.712px;-webkit-text-stroke:0.2px #3a74d8;"><span style="text-decoration:underline;text-decoration-color:#6e98e4;text-underline-offset:2.5px;text-decoration-thickness:1.2px;text-decoration-skip-ink:none;">Abel Properties</span><span style="position:relative;display:inline-block;width:22px;height:1px;"><svg width="17" height="17" viewBox="0 0 24 24" style="position:absolute;left:5px;top:-13px;"><path d="M19 19H5V5h7V3H5c-1.11 0-2 .9-2 2v14c0 1.1.89 2 2 2h14c1.1 0 2-.9 2-2v-7h-2v7zM14 3v2h3.59l-9.83 9.83 1.41 1.41L19 6.41V10h2V3h-7z" fill="#3a74d8"/></svg></span></div>
<div class="t" style="left:684.5px;top:455.75px;font-size:14px;line-height:14px;font-weight:normal;color:#5c5c5c;letter-spacing:0.4px;-webkit-text-stroke:0.2px #5c5c5c;">SI234</div>
<div class="t" style="left:812.5px;top:455.75px;font-size:14px;line-height:14px;font-weight:normal;color:#5c5c5c;letter-spacing:0.73px;-webkit-text-stroke:0.2px #5c5c5c;">Standard Project Template</div>
<div class="a" style="left:1103.5px;top:446px;width:76.5px;height:32.5px;border:1px solid #a2d6a6;border-radius:7px;background:#fff;"></div>
<svg class="a" style="left:1111px;top:453.5px;" width="17" height="17" viewBox="0 0 24 24"><path d="M12 4l-1.41 1.41L16.17 11H4v2h12.17l-5.58 5.59L12 20l8-8z" fill="#4caf50"/></svg>
<div class="t" style="left:1135.5px;top:455.75px;font-size:14px;line-height:14px;color:#4caf50;-webkit-text-stroke:0.45px #4caf50;letter-spacing:0.4px;">Push</div>
<div class="a" style="left:1231.5px;top:446px;width:88.5px;height:32.5px;border:1px solid #dadada;border-radius:7px;background:#fff;"></div>
<svg class="a" style="left:1239px;top:453.5px;" width="17" height="17" viewBox="0 0 24 24"><path d="M16.59 8.59L12 13.17 7.41 8.59 6 10l6 6 6-6z" fill="#333"/></svg>
<div class="t" style="left:1264px;top:455.75px;font-size:14px;line-height:14px;color:#333;-webkit-text-stroke:0.45px #333;letter-spacing:0.69px;">Link to</div>
<div class="a" style="left:31px;top:484px;width:1676px;height:41px;background:#edf5ef;"></div>
<div class="a" style="left:31px;top:525px;width:1676px;height:1px;background:#e2e2e2;"></div>
<svg class="a" style="left:46.18333333333334px;top:490.5833333333333px;" width="27.333333333333332" height="27.333333333333332" viewBox="0 0 24 24"><path d="M19 3H5c-1.11 0-2 .9-2 2v14c0 1.1.89 2 2 2h14c1.1 0 2-.9 2-2V5c0-1.1-.89-2-2-2zm-9 14l-5-5 1.41-1.41L10 14.17l7.59-7.59L19 8l-9 9z" fill="#3e8b47"/></svg>
<div class="a" style="left:101px;top:492.5px;width:112px;height:23.5px;border:1px solid #d9d9d9;border-radius:12px;background:#fff;"></div>
<div class="t" style="left:108.5px;top:497.75px;font-size:14px;line-height:14px;font-weight:normal;color:#3b8e8e;letter-spacing:0.5px;-webkit-text-stroke:0.2px #3b8e8e;">Ready to Sync</div>
<div class="t" style="left:264.5px;top:497.75px;font-size:14px;line-height:14px;font-weight:normal;color:#3a74d8;letter-spacing:0.583px;-webkit-text-stroke:0.2px #3a74d8;"><span style="text-decoration:underline;text-decoration-color:#6e98e4;text-underline-offset:2.5px;text-decoration-thickness:1.2px;text-decoration-skip-ink:none;">Abel Residences</span><span style="position:relative;display:inline-block;width:22px;height:1px;"><svg width="17" height="17" viewBox="0 0 24 24" style="position:absolute;left:5px;top:-13px;"><path d="M19 19H5V5h7V3H5c-1.11 0-2 .9-2 2v14c0 1.1.89 2 2 2h14c1.1 0 2-.9 2-2v-7h-2v7zM14 3v2h3.59l-9.83 9.83 1.41 1.41L19 6.41V10h2V3h-7z" fill="#3a74d8"/></svg></span></div>
<div class="t" style="left:684.5px;top:497.75px;font-size:14px;line-height:14px;font-weight:normal;color:#5c5c5c;letter-spacing:0.4px;-webkit-text-stroke:0.2px #5c5c5c;">SI248</div>
<div class="t" style="left:812.5px;top:497.75px;font-size:14px;line-height:14px;font-weight:normal;color:#5c5c5c;letter-spacing:0.73px;-webkit-text-stroke:0.2px #5c5c5c;">Standard Project Template</div>
<div class="a" style="left:1103.5px;top:488px;width:76.5px;height:32.5px;border:1px solid #a2d6a6;border-radius:7px;background:#fff;"></div>
<svg class="a" style="left:1111px;top:495.5px;" width="17" height="17" viewBox="0 0 24 24"><path d="M12 4l-1.41 1.41L16.17 11H4v2h12.17l-5.58 5.59L12 20l8-8z" fill="#4caf50"/></svg>
<div class="t" style="left:1135.5px;top:497.75px;font-size:14px;line-height:14px;color:#4caf50;-webkit-text-stroke:0.45px #4caf50;letter-spacing:0.4px;">Push</div>
<div class="a" style="left:1231.5px;top:488px;width:88.5px;height:32.5px;border:1px solid #dadada;border-radius:7px;background:#fff;"></div>
<svg class="a" style="left:1239px;top:495.5px;" width="17" height="17" viewBox="0 0 24 24"><path d="M16.59 8.59L12 13.17 7.41 8.59 6 10l6 6 6-6z" fill="#333"/></svg>
<div class="t" style="left:1264px;top:497.75px;font-size:14px;line-height:14px;color:#333;-webkit-text-stroke:0.45px #333;letter-spacing:0.69px;">Link to</div>
<div class="a" style="left:31px;top:526px;width:1676px;height:41px;background:#edf5ef;"></div>
<div class="a" style="left:31px;top:524.5px;width:58px;height:43px;border:1.5px solid #a6d1ab;"></div>
<div class="a" style="left:31px;top:567px;width:1676px;height:1px;background:#e2e2e2;"></div>
<svg class="a" style="left:46.18333333333334px;top:532.5833333333334px;" width="27.333333333333332" height="27.333333333333332" viewBox="0 0 24 24"><path d="M19 3H5c-1.11 0-2 .9-2 2v14c0 1.1.89 2 2 2h14c1.1 0 2-.9 2-2V5c0-1.1-.89-2-2-2zm-9 14l-5-5 1.41-1.41L10 14.17l7.59-7.59L19 8l-9 9z" fill="#3e8b47"/></svg>
<div class="a" style="left:101px;top:534.5px;width:112px;height:23.5px;border:1px solid #d9d9d9;border-radius:12px;background:#fff;"></div>
<div class="t" style="left:108.5px;top:539.75px;font-size:14px;line-height:14px;font-weight:normal;color:#3b8e8e;letter-spacing:0.5px;-webkit-text-stroke:0.2px #3b8e8e;">Ready to Sync</div>
<div class="t" style="left:264.5px;top:539.75px;font-size:14px;line-height:14px;font-weight:normal;color:#3a74d8;letter-spacing:0.712px;-webkit-text-stroke:0.2px #3a74d8;"><span style="text-decoration:underline;text-decoration-color:#6e98e4;text-underline-offset:2.5px;text-decoration-thickness:1.2px;text-decoration-skip-ink:none;">AGV Sync 0002-A</span><span style="position:relative;display:inline-block;width:22px;height:1px;"><svg width="17" height="17" viewBox="0 0 24 24" style="position:absolute;left:5px;top:-13px;"><path d="M19 19H5V5h7V3H5c-1.11 0-2 .9-2 2v14c0 1.1.89 2 2 2h14c1.1 0 2-.9 2-2v-7h-2v7zM14 3v2h3.59l-9.83 9.83 1.41 1.41L19 6.41V10h2V3h-7z" fill="#3a74d8"/></svg></span></div>
<div class="t" style="left:684.5px;top:539.75px;font-size:14px;line-height:14px;font-weight:normal;color:#5c5c5c;letter-spacing:1.25px;-webkit-text-stroke:0.2px #5c5c5c;">98-0002-A</div>
<div class="t" style="left:812.5px;top:539.75px;font-size:14px;line-height:14px;font-weight:normal;color:#5c5c5c;letter-spacing:0.73px;-webkit-text-stroke:0.2px #5c5c5c;">Standard Project Template</div>
<div class="a" style="left:1103.5px;top:530px;width:76.5px;height:32.5px;border:1px solid #a2d6a6;border-radius:7px;background:#fff;"></div>
<svg class="a" style="left:1111px;top:537.5px;" width="17" height="17" viewBox="0 0 24 24"><path d="M12 4l-1.41 1.41L16.17 11H4v2h12.17l-5.58 5.59L12 20l8-8z" fill="#4caf50"/></svg>
<div class="t" style="left:1135.5px;top:539.75px;font-size:14px;line-height:14px;color:#4caf50;-webkit-text-stroke:0.45px #4caf50;letter-spacing:0.4px;">Push</div>
<div class="a" style="left:1231.5px;top:530px;width:88.5px;height:32.5px;border:1px solid #dadada;border-radius:7px;background:#fff;"></div>
<svg class="a" style="left:1239px;top:537.5px;" width="17" height="17" viewBox="0 0 24 24"><path d="M16.59 8.59L12 13.17 7.41 8.59 6 10l6 6 6-6z" fill="#333"/></svg>
<div class="t" style="left:1264px;top:539.75px;font-size:14px;line-height:14px;color:#333;-webkit-text-stroke:0.45px #333;letter-spacing:0.69px;">Link to</div>
<div class="a" style="left:31px;top:609px;width:1676px;height:1px;background:#e2e2e2;"></div>
<svg class="a" style="left:46.18333333333334px;top:574.5833333333334px;" width="27.333333333333332" height="27.333333333333332" viewBox="0 0 24 24"><path d="M19 5v14H5V5h14m0-2H5c-1.1 0-2 .9-2 2v14c0 1.1.9 2 2 2h14c1.1 0 2-.9 2-2V5c0-1.1-.9-2-2-2z" fill="#666"/></svg>
<div class="a" style="left:101px;top:576.5px;width:112px;height:23.5px;border:1px solid #d9d9d9;border-radius:12px;background:#fff;"></div>
<div class="t" style="left:108.5px;top:581.75px;font-size:14px;line-height:14px;font-weight:normal;color:#3b8e8e;letter-spacing:0.5px;-webkit-text-stroke:0.2px #3b8e8e;">Ready to Sync</div>
<div class="t" style="left:264.5px;top:581.75px;font-size:14px;line-height:14px;font-weight:normal;color:#3a74d8;letter-spacing:0.737px;-webkit-text-stroke:0.2px #3a74d8;"><span style="text-decoration:underline;text-decoration-color:#6e98e4;text-underline-offset:2.5px;text-decoration-thickness:1.2px;text-decoration-skip-ink:none;">Apex Automotive Factory</span><span style="position:relative;display:inline-block;width:22px;height:1px;"><svg width="17" height="17" viewBox="0 0 24 24" style="position:absolute;left:5px;top:-13px;"><path d="M19 19H5V5h7V3H5c-1.11 0-2 .9-2 2v14c0 1.1.89 2 2 2h14c1.1 0 2-.9 2-2v-7h-2v7zM14 3v2h3.59l-9.83 9.83 1.41 1.41L19 6.41V10h2V3h-7z" fill="#3a74d8"/></svg></span></div>
<div class="t" style="left:684.5px;top:581.75px;font-size:14px;line-height:14px;font-weight:normal;color:#5c5c5c;letter-spacing:0.4px;-webkit-text-stroke:0.2px #5c5c5c;">SI157</div>
<div class="t" style="left:812.5px;top:581.75px;font-size:14px;line-height:14px;font-weight:normal;color:#5c5c5c;letter-spacing:0.73px;-webkit-text-stroke:0.2px #5c5c5c;">Standard Project Template</div>
<div class="a" style="left:1103.5px;top:572px;width:76.5px;height:32.5px;border:1px solid #a2d6a6;border-radius:7px;background:#fff;"></div>
<svg class="a" style="left:1111px;top:579.5px;" width="17" height="17" viewBox="0 0 24 24"><path d="M12 4l-1.41 1.41L16.17 11H4v2h12.17l-5.58 5.59L12 20l8-8z" fill="#4caf50"/></svg>
<div class="t" style="left:1135.5px;top:581.75px;font-size:14px;line-height:14px;color:#4caf50;-webkit-text-stroke:0.45px #4caf50;letter-spacing:0.4px;">Push</div>
<div class="a" style="left:1231.5px;top:572px;width:88.5px;height:32.5px;border:1px solid #dadada;border-radius:7px;background:#fff;"></div>
<svg class="a" style="left:1239px;top:579.5px;" width="17" height="17" viewBox="0 0 24 24"><path d="M16.59 8.59L12 13.17 7.41 8.59 6 10l6 6 6-6z" fill="#333"/></svg>
<div class="t" style="left:1264px;top:581.75px;font-size:14px;line-height:14px;color:#333;-webkit-text-stroke:0.45px #333;letter-spacing:0.69px;">Link to</div>
<div class="a" style="left:31px;top:651px;width:1676px;height:1px;background:#e2e2e2;"></div>
<svg class="a" style="left:46.18333333333334px;top:616.5833333333334px;" width="27.333333333333332" height="27.333333333333332" viewBox="0 0 24 24"><path d="M19 5v14H5V5h14m0-2H5c-1.1 0-2 .9-2 2v14c0 1.1.9 2 2 2h14c1.1 0 2-.9 2-2V5c0-1.1-.9-2-2-2z" fill="#666"/></svg>
<div class="a" style="left:101px;top:618.5px;width:112px;height:23.5px;border:1px solid #d9d9d9;border-radius:12px;background:#fff;"></div>
<div class="t" style="left:108.5px;top:623.75px;font-size:14px;line-height:14px;font-weight:normal;color:#3b8e8e;letter-spacing:0.5px;-webkit-text-stroke:0.2px #3b8e8e;">Ready to Sync</div>
<div class="t" style="left:264.5px;top:623.75px;font-size:14px;line-height:14px;font-weight:normal;color:#3a74d8;letter-spacing:0.665px;-webkit-text-stroke:0.2px #3a74d8;"><span style="text-decoration:underline;text-decoration-color:#6e98e4;text-underline-offset:2.5px;text-decoration-thickness:1.2px;text-decoration-skip-ink:none;">Apex Plaza Construction</span><span style="position:relative;display:inline-block;width:22px;height:1px;"><svg width="17" height="17" viewBox="0 0 24 24" style="position:absolute;left:5px;top:-13px;"><path d="M19 19H5V5h7V3H5c-1.11 0-2 .9-2 2v14c0 1.1.89 2 2 2h14c1.1 0 2-.9 2-2v-7h-2v7zM14 3v2h3.59l-9.83 9.83 1.41 1.41L19 6.41V10h2V3h-7z" fill="#3a74d8"/></svg></span></div>
<div class="t" style="left:684.5px;top:623.75px;font-size:14px;line-height:14px;font-weight:normal;color:#5c5c5c;letter-spacing:0.4px;-webkit-text-stroke:0.2px #5c5c5c;">SI104</div>
<div class="t" style="left:812.5px;top:623.75px;font-size:14px;line-height:14px;font-weight:normal;color:#5c5c5c;letter-spacing:0.73px;-webkit-text-stroke:0.2px #5c5c5c;">Standard Project Template</div>
<div class="a" style="left:1103.5px;top:614px;width:76.5px;height:32.5px;border:1px solid #a2d6a6;border-radius:7px;background:#fff;"></div>
<svg class="a" style="left:1111px;top:621.5px;" width="17" height="17" viewBox="0 0 24 24"><path d="M12 4l-1.41 1.41L16.17 11H4v2h12.17l-5.58 5.59L12 20l8-8z" fill="#4caf50"/></svg>
<div class="t" style="left:1135.5px;top:623.75px;font-size:14px;line-height:14px;color:#4caf50;-webkit-text-stroke:0.45px #4caf50;letter-spacing:0.4px;">Push</div>
<div class="a" style="left:1231.5px;top:614px;width:88.5px;height:32.5px;border:1px solid #dadada;border-radius:7px;background:#fff;"></div>
<svg class="a" style="left:1239px;top:621.5px;" width="17" height="17" viewBox="0 0 24 24"><path d="M16.59 8.59L12 13.17 7.41 8.59 6 10l6 6 6-6z" fill="#333"/></svg>
<div class="t" style="left:1264px;top:623.75px;font-size:14px;line-height:14px;color:#333;-webkit-text-stroke:0.45px #333;letter-spacing:0.69px;">Link to</div>
<div class="a" style="left:31px;top:692px;width:1676px;height:1px;background:#e2e2e2;"></div>
<svg class="a" style="left:46.18333333333334px;top:657.5833333333334px;" width="27.333333333333332" height="27.333333333333332" viewBox="0 0 24 24"><path d="M19 5v14H5V5h14m0-2H5c-1.1 0-2 .9-2 2v14c0 1.1.9 2 2 2h14c1.1 0 2-.9 2-2V5c0-1.1-.9-2-2-2z" fill="#666"/></svg>
<div class="a" style="left:101px;top:659.5px;width:112px;height:23.5px;border:1px solid #d9d9d9;border-radius:12px;background:#fff;"></div>
<div class="t" style="left:108.5px;top:664.75px;font-size:14px;line-height:14px;font-weight:normal;color:#3b8e8e;letter-spacing:0.5px;-webkit-text-stroke:0.2px #3b8e8e;">Ready to Sync</div>
<div class="t" style="left:264.5px;top:664.75px;font-size:14px;line-height:14px;font-weight:normal;color:#3a74d8;letter-spacing:0.505px;-webkit-text-stroke:0.2px #3a74d8;"><span style="text-decoration:underline;text-decoration-color:#6e98e4;text-underline-offset:2.5px;text-decoration-thickness:1.2px;text-decoration-skip-ink:none;">Apex Renewable Energy Park</span><span style="position:relative;display:inline-block;width:22px;height:1px;"><svg width="17" height="17" viewBox="0 0 24 24" style="position:absolute;left:5px;top:-13px;"><path d="M19 19H5V5h7V3H5c-1.11 0-2 .9-2 2v14c0 1.1.89 2 2 2h14c1.1 0 2-.9 2-2v-7h-2v7zM14 3v2h3.59l-9.83 9.83 1.41 1.41L19 6.41V10h2V3h-7z" fill="#3a74d8"/></svg></span></div>
<div class="t" style="left:684.5px;top:664.75px;font-size:14px;line-height:14px;font-weight:normal;color:#5c5c5c;letter-spacing:0.4px;-webkit-text-stroke:0.2px #5c5c5c;">SI165</div>
<div class="t" style="left:812.5px;top:664.75px;font-size:14px;line-height:14px;font-weight:normal;color:#5c5c5c;letter-spacing:0.73px;-webkit-text-stroke:0.2px #5c5c5c;">Standard Project Template</div>
<div class="a" style="left:1103.5px;top:655px;width:76.5px;height:32.5px;border:1px solid #a2d6a6;border-radius:7px;background:#fff;"></div>
<svg class="a" style="left:1111px;top:662.5px;" width="17" height="17" viewBox="0 0 24 24"><path d="M12 4l-1.41 1.41L16.17 11H4v2h12.17l-5.58 5.59L12 20l8-8z" fill="#4caf50"/></svg>
<div class="t" style="left:1135.5px;top:664.75px;font-size:14px;line-height:14px;color:#4caf50;-webkit-text-stroke:0.45px #4caf50;letter-spacing:0.4px;">Push</div>
<div class="a" style="left:1231.5px;top:655px;width:88.5px;height:32.5px;border:1px solid #dadada;border-radius:7px;background:#fff;"></div>
<svg class="a" style="left:1239px;top:662.5px;" width="17" height="17" viewBox="0 0 24 24"><path d="M16.59 8.59L12 13.17 7.41 8.59 6 10l6 6 6-6z" fill="#333"/></svg>
<div class="t" style="left:1264px;top:664.75px;font-size:14px;line-height:14px;color:#333;-webkit-text-stroke:0.45px #333;letter-spacing:0.69px;">Link to</div>
<div class="a" style="left:31px;top:734px;width:1676px;height:1px;background:#e2e2e2;"></div>
<svg class="a" style="left:46.18333333333334px;top:699.5833333333334px;" width="27.333333333333332" height="27.333333333333332" viewBox="0 0 24 24"><path d="M19 5v14H5V5h14m0-2H5c-1.1 0-2 .9-2 2v14c0 1.1.9 2 2 2h14c1.1 0 2-.9 2-2V5c0-1.1-.9-2-2-2z" fill="#666"/></svg>
<div class="a" style="left:101px;top:701.5px;width:112px;height:23.5px;border:1px solid #d9d9d9;border-radius:12px;background:#fff;"></div>
<div class="t" style="left:108.5px;top:706.75px;font-size:14px;line-height:14px;font-weight:normal;color:#3b8e8e;letter-spacing:0.5px;-webkit-text-stroke:0.2px #3b8e8e;">Ready to Sync</div>
<div class="t" style="left:264.5px;top:706.75px;font-size:14px;line-height:14px;font-weight:normal;color:#3a74d8;letter-spacing:0.727px;-webkit-text-stroke:0.2px #3a74d8;"><span style="text-decoration:underline;text-decoration-color:#6e98e4;text-underline-offset:2.5px;text-decoration-thickness:1.2px;text-decoration-skip-ink:none;">Assembly Properties</span><span style="position:relative;display:inline-block;width:22px;height:1px;"><svg width="17" height="17" viewBox="0 0 24 24" style="position:absolute;left:5px;top:-13px;"><path d="M19 19H5V5h7V3H5c-1.11 0-2 .9-2 2v14c0 1.1.89 2 2 2h14c1.1 0 2-.9 2-2v-7h-2v7zM14 3v2h3.59l-9.83 9.83 1.41 1.41L19 6.41V10h2V3h-7z" fill="#3a74d8"/></svg></span></div>
<div class="t" style="left:684.5px;top:706.75px;font-size:14px;line-height:14px;font-weight:normal;color:#5c5c5c;letter-spacing:0.4px;-webkit-text-stroke:0.2px #5c5c5c;">SI214</div>
<div class="t" style="left:812.5px;top:706.75px;font-size:14px;line-height:14px;font-weight:normal;color:#5c5c5c;letter-spacing:0.73px;-webkit-text-stroke:0.2px #5c5c5c;">Standard Project Template</div>
<div class="a" style="left:1103.5px;top:697px;width:76.5px;height:32.5px;border:1px solid #a2d6a6;border-radius:7px;background:#fff;"></div>
<svg class="a" style="left:1111px;top:704.5px;" width="17" height="17" viewBox="0 0 24 24"><path d="M12 4l-1.41 1.41L16.17 11H4v2h12.17l-5.58 5.59L12 20l8-8z" fill="#4caf50"/></svg>
<div class="t" style="left:1135.5px;top:706.75px;font-size:14px;line-height:14px;color:#4caf50;-webkit-text-stroke:0.45px #4caf50;letter-spacing:0.4px;">Push</div>
<div class="a" style="left:1231.5px;top:697px;width:88.5px;height:32.5px;border:1px solid #dadada;border-radius:7px;background:#fff;"></div>
<svg class="a" style="left:1239px;top:704.5px;" width="17" height="17" viewBox="0 0 24 24"><path d="M16.59 8.59L12 13.17 7.41 8.59 6 10l6 6 6-6z" fill="#333"/></svg>
<div class="t" style="left:1264px;top:706.75px;font-size:14px;line-height:14px;color:#333;-webkit-text-stroke:0.45px #333;letter-spacing:0.69px;">Link to</div>
<div class="a" style="left:31px;top:776px;width:1676px;height:1px;background:#e2e2e2;"></div>
<svg class="a" style="left:46.18333333333334px;top:741.5833333333334px;" width="27.333333333333332" height="27.333333333333332" viewBox="0 0 24 24"><path d="M19 5v14H5V5h14m0-2H5c-1.1 0-2 .9-2 2v14c0 1.1.9 2 2 2h14c1.1 0 2-.9 2-2V5c0-1.1-.9-2-2-2z" fill="#666"/></svg>
<div class="a" style="left:101px;top:743.5px;width:112px;height:23.5px;border:1px solid #d9d9d9;border-radius:12px;background:#fff;"></div>
<div class="t" style="left:108.5px;top:748.75px;font-size:14px;line-height:14px;font-weight:normal;color:#3b8e8e;letter-spacing:0.5px;-webkit-text-stroke:0.2px #3b8e8e;">Ready to Sync</div>
<div class="t" style="left:264.5px;top:748.75px;font-size:14px;line-height:14px;font-weight:normal;color:#3a74d8;letter-spacing:0.572px;-webkit-text-stroke:0.2px #3a74d8;"><span style="text-decoration:underline;text-decoration-color:#6e98e4;text-underline-offset:2.5px;text-decoration-thickness:1.2px;text-decoration-skip-ink:none;">Atlee Residences</span><span style="position:relative;display:inline-block;width:22px;height:1px;"><svg width="17" height="17" viewBox="0 0 24 24" style="position:absolute;left:5px;top:-13px;"><path d="M19 19H5V5h7V3H5c-1.11 0-2 .9-2 2v14c0 1.1.89 2 2 2h14c1.1 0 2-.9 2-2v-7h-2v7zM14 3v2h3.59l-9.83 9.83 1.41 1.41L19 6.41V10h2V3h-7z" fill="#3a74d8"/></svg></span></div>
<div class="t" style="left:684.5px;top:748.75px;font-size:14px;line-height:14px;font-weight:normal;color:#5c5c5c;letter-spacing:0.4px;-webkit-text-stroke:0.2px #5c5c5c;">SI211</div>
<div class="t" style="left:812.5px;top:748.75px;font-size:14px;line-height:14px;font-weight:normal;color:#5c5c5c;letter-spacing:0.73px;-webkit-text-stroke:0.2px #5c5c5c;">Standard Project Template</div>
<div class="a" style="left:1103.5px;top:739px;width:76.5px;height:32.5px;border:1px solid #a2d6a6;border-radius:7px;background:#fff;"></div>
<svg class="a" style="left:1111px;top:746.5px;" width="17" height="17" viewBox="0 0 24 24"><path d="M12 4l-1.41 1.41L16.17 11H4v2h12.17l-5.58 5.59L12 20l8-8z" fill="#4caf50"/></svg>
<div class="t" style="left:1135.5px;top:748.75px;font-size:14px;line-height:14px;color:#4caf50;-webkit-text-stroke:0.45px #4caf50;letter-spacing:0.4px;">Push</div>
<div class="a" style="left:1231.5px;top:739px;width:88.5px;height:32.5px;border:1px solid #dadada;border-radius:7px;background:#fff;"></div>
<svg class="a" style="left:1239px;top:746.5px;" width="17" height="17" viewBox="0 0 24 24"><path d="M16.59 8.59L12 13.17 7.41 8.59 6 10l6 6 6-6z" fill="#333"/></svg>
<div class="t" style="left:1264px;top:748.75px;font-size:14px;line-height:14px;color:#333;-webkit-text-stroke:0.45px #333;letter-spacing:0.69px;">Link to</div>
<div class="a" style="left:31px;top:818px;width:1676px;height:1px;background:#e2e2e2;"></div>
<svg class="a" style="left:46.18333333333334px;top:783.5833333333334px;" width="27.333333333333332" height="27.333333333333332" viewBox="0 0 24 24"><path d="M19 5v14H5V5h14m0-2H5c-1.1 0-2 .9-2 2v14c0 1.1.9 2 2 2h14c1.1 0 2-.9 2-2V5c0-1.1-.9-2-2-2z" fill="#666"/></svg>
<div class="a" style="left:101px;top:785.5px;width:112px;height:23.5px;border:1px solid #d9d9d9;border-radius:12px;background:#fff;"></div>
<div class="t" style="left:108.5px;top:790.75px;font-size:14px;line-height:14px;font-weight:normal;color:#3b8e8e;letter-spacing:0.5px;-webkit-text-stroke:0.2px #3b8e8e;">Ready to Sync</div>
<div class="t" style="left:264.5px;top:790.75px;font-size:14px;line-height:14px;font-weight:normal;color:#3a74d8;letter-spacing:0.586px;-webkit-text-stroke:0.2px #3a74d8;"><span style="text-decoration:underline;text-decoration-color:#6e98e4;text-underline-offset:2.5px;text-decoration-thickness:1.2px;text-decoration-skip-ink:none;">Ben Woodman</span><span style="position:relative;display:inline-block;width:22px;height:1px;"><svg width="17" height="17" viewBox="0 0 24 24" style="position:absolute;left:5px;top:-13px;"><path d="M19 19H5V5h7V3H5c-1.11 0-2 .9-2 2v14c0 1.1.89 2 2 2h14c1.1 0 2-.9 2-2v-7h-2v7zM14 3v2h3.59l-9.83 9.83 1.41 1.41L19 6.41V10h2V3h-7z" fill="#3a74d8"/></svg></span></div>
<div class="t" style="left:684.5px;top:790.75px;font-size:14px;line-height:14px;font-weight:normal;color:#5c5c5c;letter-spacing:0.4px;-webkit-text-stroke:0.2px #5c5c5c;">BW-102</div>
<div class="t" style="left:812.5px;top:790.75px;font-size:14px;line-height:14px;font-weight:normal;color:#5c5c5c;letter-spacing:0.73px;-webkit-text-stroke:0.2px #5c5c5c;">Standard Project Template</div>
<div class="a" style="left:1103.5px;top:781px;width:76.5px;height:32.5px;border:1px solid #a2d6a6;border-radius:7px;background:#fff;"></div>
<svg class="a" style="left:1111px;top:788.5px;" width="17" height="17" viewBox="0 0 24 24"><path d="M12 4l-1.41 1.41L16.17 11H4v2h12.17l-5.58 5.59L12 20l8-8z" fill="#4caf50"/></svg>
<div class="t" style="left:1135.5px;top:790.75px;font-size:14px;line-height:14px;color:#4caf50;-webkit-text-stroke:0.45px #4caf50;letter-spacing:0.4px;">Push</div>
<div class="a" style="left:1231.5px;top:781px;width:88.5px;height:32.5px;border:1px solid #dadada;border-radius:7px;background:#fff;"></div>
<svg class="a" style="left:1239px;top:788.5px;" width="17" height="17" viewBox="0 0 24 24"><path d="M16.59 8.59L12 13.17 7.41 8.59 6 10l6 6 6-6z" fill="#333"/></svg>
<div class="t" style="left:1264px;top:790.75px;font-size:14px;line-height:14px;color:#333;-webkit-text-stroke:0.45px #333;letter-spacing:0.69px;">Link to</div>
<div class="a" style="left:31px;top:860px;width:1676px;height:1px;background:#e2e2e2;"></div>
<svg class="a" style="left:46.18333333333334px;top:825.5833333333334px;" width="27.333333333333332" height="27.333333333333332" viewBox="0 0 24 24"><path d="M19 5v14H5V5h14m0-2H5c-1.1 0-2 .9-2 2v14c0 1.1.9 2 2 2h14c1.1 0 2-.9 2-2V5c0-1.1-.9-2-2-2z" fill="#666"/></svg>
<div class="a" style="left:101px;top:827.5px;width:112px;height:23.5px;border:1px solid #d9d9d9;border-radius:12px;background:#fff;"></div>
<div class="t" style="left:108.5px;top:832.75px;font-size:14px;line-height:14px;font-weight:normal;color:#3b8e8e;letter-spacing:0.5px;-webkit-text-stroke:0.2px #3b8e8e;">Ready to Sync</div>
<div class="t" style="left:264.5px;top:832.75px;font-size:14px;line-height:14px;font-weight:normal;color:#3a74d8;letter-spacing:0.471px;-webkit-text-stroke:0.2px #3a74d8;"><span style="text-decoration:underline;text-decoration-color:#6e98e4;text-underline-offset:2.5px;text-decoration-thickness:1.2px;text-decoration-skip-ink:none;">Blue River Dam Expansion</span><span style="position:relative;display:inline-block;width:22px;height:1px;"><svg width="17" height="17" viewBox="0 0 24 24" style="position:absolute;left:5px;top:-13px;"><path d="M19 19H5V5h7V3H5c-1.11 0-2 .9-2 2v14c0 1.1.89 2 2 2h14c1.1 0 2-.9 2-2v-7h-2v7zM14 3v2h3.59l-9.83 9.83 1.41 1.41L19 6.41V10h2V3h-7z" fill="#3a74d8"/></svg></span></div>
<div class="t" style="left:684.5px;top:832.75px;font-size:14px;line-height:14px;font-weight:normal;color:#5c5c5c;letter-spacing:0.4px;-webkit-text-stroke:0.2px #5c5c5c;">SI127</div>
<div class="t" style="left:812.5px;top:832.75px;font-size:14px;line-height:14px;font-weight:normal;color:#5c5c5c;letter-spacing:0.73px;-webkit-text-stroke:0.2px #5c5c5c;">Standard Project Template</div>
<div class="a" style="left:1103.5px;top:823px;width:76.5px;height:32.5px;border:1px solid #a2d6a6;border-radius:7px;background:#fff;"></div>
<svg class="a" style="left:1111px;top:830.5px;" width="17" height="17" viewBox="0 0 24 24"><path d="M12 4l-1.41 1.41L16.17 11H4v2h12.17l-5.58 5.59L12 20l8-8z" fill="#4caf50"/></svg>
<div class="t" style="left:1135.5px;top:832.75px;font-size:14px;line-height:14px;color:#4caf50;-webkit-text-stroke:0.45px #4caf50;letter-spacing:0.4px;">Push</div>
<div class="a" style="left:1231.5px;top:823px;width:88.5px;height:32.5px;border:1px solid #dadada;border-radius:7px;background:#fff;"></div>
<svg class="a" style="left:1239px;top:830.5px;" width="17" height="17" viewBox="0 0 24 24"><path d="M16.59 8.59L12 13.17 7.41 8.59 6 10l6 6 6-6z" fill="#333"/></svg>
<div class="t" style="left:1264px;top:832.75px;font-size:14px;line-height:14px;color:#333;-webkit-text-stroke:0.45px #333;letter-spacing:0.69px;">Link to</div>
<div class="a" style="left:31px;top:902px;width:1676px;height:1px;background:#e2e2e2;"></div>
<svg class="a" style="left:46.18333333333334px;top:867.5833333333334px;" width="27.333333333333332" height="27.333333333333332" viewBox="0 0 24 24"><path d="M19 5v14H5V5h14m0-2H5c-1.1 0-2 .9-2 2v14c0 1.1.9 2 2 2h14c1.1 0 2-.9 2-2V5c0-1.1-.9-2-2-2z" fill="#666"/></svg>
<div class="a" style="left:101px;top:869.5px;width:112px;height:23.5px;border:1px solid #d9d9d9;border-radius:12px;background:#fff;"></div>
<div class="t" style="left:108.5px;top:874.75px;font-size:14px;line-height:14px;font-weight:normal;color:#3b8e8e;letter-spacing:0.5px;-webkit-text-stroke:0.2px #3b8e8e;">Ready to Sync</div>
<div class="t" style="left:264.5px;top:874.75px;font-size:14px;line-height:14px;font-weight:normal;color:#3a74d8;letter-spacing:0.643px;-webkit-text-stroke:0.2px #3a74d8;"><span style="text-decoration:underline;text-decoration-color:#6e98e4;text-underline-offset:2.5px;text-decoration-thickness:1.2px;text-decoration-skip-ink:none;">Blue River Hydroelectric Dam</span><span style="position:relative;display:inline-block;width:22px;height:1px;"><svg width="17" height="17" viewBox="0 0 24 24" style="position:absolute;left:5px;top:-13px;"><path d="M19 19H5V5h7V3H5c-1.11 0-2 .9-2 2v14c0 1.1.89 2 2 2h14c1.1 0 2-.9 2-2v-7h-2v7zM14 3v2h3.59l-9.83 9.83 1.41 1.41L19 6.41V10h2V3h-7z" fill="#3a74d8"/></svg></span></div>
<div class="t" style="left:684.5px;top:874.75px;font-size:14px;line-height:14px;font-weight:normal;color:#5c5c5c;letter-spacing:0.4px;-webkit-text-stroke:0.2px #5c5c5c;">SI161</div>
<div class="t" style="left:812.5px;top:874.75px;font-size:14px;line-height:14px;font-weight:normal;color:#5c5c5c;letter-spacing:0.73px;-webkit-text-stroke:0.2px #5c5c5c;">Standard Project Template</div>
<div class="a" style="left:1103.5px;top:865px;width:76.5px;height:32.5px;border:1px solid #a2d6a6;border-radius:7px;background:#fff;"></div>
<svg class="a" style="left:1111px;top:872.5px;" width="17" height="17" viewBox="0 0 24 24"><path d="M12 4l-1.41 1.41L16.17 11H4v2h12.17l-5.58 5.59L12 20l8-8z" fill="#4caf50"/></svg>
<div class="t" style="left:1135.5px;top:874.75px;font-size:14px;line-height:14px;color:#4caf50;-webkit-text-stroke:0.45px #4caf50;letter-spacing:0.4px;">Push</div>
<div class="a" style="left:1231.5px;top:865px;width:88.5px;height:32.5px;border:1px solid #dadada;border-radius:7px;background:#fff;"></div>
<svg class="a" style="left:1239px;top:872.5px;" width="17" height="17" viewBox="0 0 24 24"><path d="M16.59 8.59L12 13.17 7.41 8.59 6 10l6 6 6-6z" fill="#333"/></svg>
<div class="t" style="left:1264px;top:874.75px;font-size:14px;line-height:14px;color:#333;-webkit-text-stroke:0.45px #333;letter-spacing:0.69px;">Link to</div>
<div class="a" style="left:31px;top:944px;width:1676px;height:1px;background:#e2e2e2;"></div>
<svg class="a" style="left:46.18333333333334px;top:909.5833333333334px;" width="27.333333333333332" height="27.333333333333332" viewBox="0 0 24 24"><path d="M19 5v14H5V5h14m0-2H5c-1.1 0-2 .9-2 2v14c0 1.1.9 2 2 2h14c1.1 0 2-.9 2-2V5c0-1.1-.9-2-2-2z" fill="#666"/></svg>
<div class="a" style="left:101px;top:911.5px;width:112px;height:23.5px;border:1px solid #d9d9d9;border-radius:12px;background:#fff;"></div>
<div class="t" style="left:108.5px;top:916.75px;font-size:14px;line-height:14px;font-weight:normal;color:#3b8e8e;letter-spacing:0.5px;-webkit-text-stroke:0.2px #3b8e8e;">Ready to Sync</div>
<div class="t" style="left:264.5px;top:916.75px;font-size:14px;line-height:14px;font-weight:normal;color:#3a74d8;letter-spacing:0.76px;-webkit-text-stroke:0.2px #3a74d8;"><span style="text-decoration:underline;text-decoration-color:#6e98e4;text-underline-offset:2.5px;text-decoration-thickness:1.2px;text-decoration-skip-ink:none;">Brentwood Arena</span><span style="position:relative;display:inline-block;width:22px;height:1px;"><svg width="17" height="17" viewBox="0 0 24 24" style="position:absolute;left:5px;top:-13px;"><path d="M19 19H5V5h7V3H5c-1.11 0-2 .9-2 2v14c0 1.1.89 2 2 2h14c1.1 0 2-.9 2-2v-7h-2v7zM14 3v2h3.59l-9.83 9.83 1.41 1.41L19 6.41V10h2V3h-7z" fill="#3a74d8"/></svg></span></div>
<div class="t" style="left:684.5px;top:916.75px;font-size:14px;line-height:14px;font-weight:normal;color:#5c5c5c;letter-spacing:0.4px;-webkit-text-stroke:0.2px #5c5c5c;">A126</div>
<div class="t" style="left:812.5px;top:916.75px;font-size:14px;line-height:14px;font-weight:normal;color:#5c5c5c;letter-spacing:0.73px;-webkit-text-stroke:0.2px #5c5c5c;">Standard Project Template</div>
<div class="a" style="left:1103.5px;top:907px;width:76.5px;height:32.5px;border:1px solid #a2d6a6;border-radius:7px;background:#fff;"></div>
<svg class="a" style="left:1111px;top:914.5px;" width="17" height="17" viewBox="0 0 24 24"><path d="M12 4l-1.41 1.41L16.17 11H4v2h12.17l-5.58 5.59L12 20l8-8z" fill="#4caf50"/></svg>
<div class="t" style="left:1135.5px;top:916.75px;font-size:14px;line-height:14px;color:#4caf50;-webkit-text-stroke:0.45px #4caf50;letter-spacing:0.4px;">Push</div>
<div class="a" style="left:1231.5px;top:907px;width:88.5px;height:32.5px;border:1px solid #dadada;border-radius:7px;background:#fff;"></div>
<svg class="a" style="left:1239px;top:914.5px;" width="17" height="17" viewBox="0 0 24 24"><path d="M16.59 8.59L12 13.17 7.41 8.59 6 10l6 6 6-6z" fill="#333"/></svg>
<div class="t" style="left:1264px;top:916.75px;font-size:14px;line-height:14px;color:#333;-webkit-text-stroke:0.45px #333;letter-spacing:0.69px;">Link to</div>
<div class="a" style="left:31px;top:986px;width:1676px;height:1px;background:#e2e2e2;"></div>
<svg class="a" style="left:46.18333333333334px;top:951.5833333333334px;" width="27.333333333333332" height="27.333333333333332" viewBox="0 0 24 24"><path d="M19 5v14H5V5h14m0-2H5c-1.1 0-2 .9-2 2v14c0 1.1.9 2 2 2h14c1.1 0 2-.9 2-2V5c0-1.1-.9-2-2-2z" fill="#666"/></svg>
<div class="a" style="left:101px;top:953.5px;width:112px;height:23.5px;border:1px solid #d9d9d9;border-radius:12px;background:#fff;"></div>
<div class="t" style="left:108.5px;top:958.75px;font-size:14px;line-height:14px;font-weight:normal;color:#3b8e8e;letter-spacing:0.5px;-webkit-text-stroke:0.2px #3b8e8e;">Ready to Sync</div>
<div class="t" style="left:264.5px;top:958.75px;font-size:14px;line-height:14px;font-weight:normal;color:#3a74d8;letter-spacing:0.779px;-webkit-text-stroke:0.2px #3a74d8;"><span style="text-decoration:underline;text-decoration-color:#6e98e4;text-underline-offset:2.5px;text-decoration-thickness:1.2px;text-decoration-skip-ink:none;">Brentwood Hotel</span><span style="position:relative;display:inline-block;width:22px;height:1px;"><svg width="17" height="17" viewBox="0 0 24 24" style="position:absolute;left:5px;top:-13px;"><path d="M19 19H5V5h7V3H5c-1.11 0-2 .9-2 2v14c0 1.1.89 2 2 2h14c1.1 0 2-.9 2-2v-7h-2v7zM14 3v2h3.59l-9.83 9.83 1.41 1.41L19 6.41V10h2V3h-7z" fill="#3a74d8"/></svg></span></div>
<div class="t" style="left:684.5px;top:958.75px;font-size:14px;line-height:14px;font-weight:normal;color:#5c5c5c;letter-spacing:0.4px;-webkit-text-stroke:0.2px #5c5c5c;">D123</div>
<div class="t" style="left:812.5px;top:958.75px;font-size:14px;line-height:14px;font-weight:normal;color:#5c5c5c;letter-spacing:0.73px;-webkit-text-stroke:0.2px #5c5c5c;">Standard Project Template</div>
<div class="a" style="left:1103.5px;top:949px;width:76.5px;height:32.5px;border:1px solid #a2d6a6;border-radius:7px;background:#fff;"></div>
<svg class="a" style="left:1111px;top:956.5px;" width="17" height="17" viewBox="0 0 24 24"><path d="M12 4l-1.41 1.41L16.17 11H4v2h12.17l-5.58 5.59L12 20l8-8z" fill="#4caf50"/></svg>
<div class="t" style="left:1135.5px;top:958.75px;font-size:14px;line-height:14px;color:#4caf50;-webkit-text-stroke:0.45px #4caf50;letter-spacing:0.4px;">Push</div>
<div class="a" style="left:1231.5px;top:949px;width:88.5px;height:32.5px;border:1px solid #dadada;border-radius:7px;background:#fff;"></div>
<svg class="a" style="left:1239px;top:956.5px;" width="17" height="17" viewBox="0 0 24 24"><path d="M16.59 8.59L12 13.17 7.41 8.59 6 10l6 6 6-6z" fill="#333"/></svg>
<div class="t" style="left:1264px;top:958.75px;font-size:14px;line-height:14px;color:#333;-webkit-text-stroke:0.45px #333;letter-spacing:0.69px;">Link to</div>
<div class="a" style="left:31px;top:1028px;width:1676px;height:1px;background:#e2e2e2;"></div>
<svg class="a" style="left:46.18333333333334px;top:993.5833333333334px;" width="27.333333333333332" height="27.333333333333332" viewBox="0 0 24 24"><path d="M19 5v14H5V5h14m0-2H5c-1.1 0-2 .9-2 2v14c0 1.1.9 2 2 2h14c1.1 0 2-.9 2-2V5c0-1.1-.9-2-2-2z" fill="#666"/></svg>
<div class="a" style="left:101px;top:995.5px;width:112px;height:23.5px;border:1px solid #d9d9d9;border-radius:12px;background:#fff;"></div>
<div class="t" style="left:108.5px;top:1000.75px;font-size:14px;line-height:14px;font-weight:normal;color:#3b8e8e;letter-spacing:0.5px;-webkit-text-stroke:0.2px #3b8e8e;">Ready to Sync</div>
<div class="t" style="left:264.5px;top:1000.75px;font-size:14px;line-height:14px;font-weight:normal;color:#3a74d8;letter-spacing:0.661px;-webkit-text-stroke:0.2px #3a74d8;"><span style="text-decoration:underline;text-decoration-color:#6e98e4;text-underline-offset:2.5px;text-decoration-thickness:1.2px;text-decoration-skip-ink:none;">Brentwood Power Plant</span><span style="position:relative;display:inline-block;width:22px;height:1px;"><svg width="17" height="17" viewBox="0 0 24 24" style="position:absolute;left:5px;top:-13px;"><path d="M19 19H5V5h7V3H5c-1.11 0-2 .9-2 2v14c0 1.1.89 2 2 2h14c1.1 0 2-.9 2-2v-7h-2v7zM14 3v2h3.59l-9.83 9.83 1.41 1.41L19 6.41V10h2V3h-7z" fill="#3a74d8"/></svg></span></div>
<div class="t" style="left:684.5px;top:1000.75px;font-size:14px;line-height:14px;font-weight:normal;color:#5c5c5c;letter-spacing:0.4px;-webkit-text-stroke:0.2px #5c5c5c;">A127</div>
<div class="t" style="left:812.5px;top:1000.75px;font-size:14px;line-height:14px;font-weight:normal;color:#5c5c5c;letter-spacing:0.73px;-webkit-text-stroke:0.2px #5c5c5c;">Standard Project Template</div>
<div class="a" style="left:1103.5px;top:991px;width:76.5px;height:32.5px;border:1px solid #a2d6a6;border-radius:7px;background:#fff;"></div>
<svg class="a" style="left:1111px;top:998.5px;" width="17" height="17" viewBox="0 0 24 24"><path d="M12 4l-1.41 1.41L16.17 11H4v2h12.17l-5.58 5.59L12 20l8-8z" fill="#4caf50"/></svg>
<div class="t" style="left:1135.5px;top:1000.75px;font-size:14px;line-height:14px;color:#4caf50;-webkit-text-stroke:0.45px #4caf50;letter-spacing:0.4px;">Push</div>
<div class="a" style="left:1231.5px;top:991px;width:88.5px;height:32.5px;border:1px solid #dadada;border-radius:7px;background:#fff;"></div>
<svg class="a" style="left:1239px;top:998.5px;" width="17" height="17" viewBox="0 0 24 24"><path d="M16.59 8.59L12 13.17 7.41 8.59 6 10l6 6 6-6z" fill="#333"/></svg>
<div class="t" style="left:1264px;top:1000.75px;font-size:14px;line-height:14px;color:#333;-webkit-text-stroke:0.45px #333;letter-spacing:0.69px;">Link to</div>
<div class="a" style="left:31px;top:1070px;width:1676px;height:1px;background:#e2e2e2;"></div>
<svg class="a" style="left:46.18333333333334px;top:1035.5833333333333px;" width="27.333333333333332" height="27.333333333333332" viewBox="0 0 24 24"><path d="M19 5v14H5V5h14m0-2H5c-1.1 0-2 .9-2 2v14c0 1.1.9 2 2 2h14c1.1 0 2-.9 2-2V5c0-1.1-.9-2-2-2z" fill="#666"/></svg>
<div class="a" style="left:101px;top:1037.5px;width:112px;height:23.5px;border:1px solid #d9d9d9;border-radius:12px;background:#fff;"></div>
<div class="t" style="left:108.5px;top:1042.75px;font-size:14px;line-height:14px;font-weight:normal;color:#3b8e8e;letter-spacing:0.5px;-webkit-text-stroke:0.2px #3b8e8e;">Ready to Sync</div>
<div class="t" style="left:264.5px;top:1042.75px;font-size:14px;line-height:14px;font-weight:normal;color:#3a74d8;letter-spacing:0.773px;-webkit-text-stroke:0.2px #3a74d8;"><span style="text-decoration:underline;text-decoration-color:#6e98e4;text-underline-offset:2.5px;text-decoration-thickness:1.2px;text-decoration-skip-ink:none;">Brentwood Properties</span><span style="position:relative;display:inline-block;width:22px;height:1px;"><svg width="17" height="17" viewBox="0 0 24 24" style="position:absolute;left:5px;top:-13px;"><path d="M19 19H5V5h7V3H5c-1.11 0-2 .9-2 2v14c0 1.1.89 2 2 2h14c1.1 0 2-.9 2-2v-7h-2v7zM14 3v2h3.59l-9.83 9.83 1.41 1.41L19 6.41V10h2V3h-7z" fill="#3a74d8"/></svg></span></div>
<div class="t" style="left:684.5px;top:1042.75px;font-size:14px;line-height:14px;font-weight:normal;color:#5c5c5c;letter-spacing:0.4px;-webkit-text-stroke:0.2px #5c5c5c;">A124</div>
<div class="t" style="left:812.5px;top:1042.75px;font-size:14px;line-height:14px;font-weight:normal;color:#5c5c5c;letter-spacing:0.73px;-webkit-text-stroke:0.2px #5c5c5c;">Standard Project Template</div>
<div class="a" style="left:1103.5px;top:1033px;width:76.5px;height:32.5px;border:1px solid #a2d6a6;border-radius:7px;background:#fff;"></div>
<svg class="a" style="left:1111px;top:1040.5px;" width="17" height="17" viewBox="0 0 24 24"><path d="M12 4l-1.41 1.41L16.17 11H4v2h12.17l-5.58 5.59L12 20l8-8z" fill="#4caf50"/></svg>
<div class="t" style="left:1135.5px;top:1042.75px;font-size:14px;line-height:14px;color:#4caf50;-webkit-text-stroke:0.45px #4caf50;letter-spacing:0.4px;">Push</div>
<div class="a" style="left:1231.5px;top:1033px;width:88.5px;height:32.5px;border:1px solid #dadada;border-radius:7px;background:#fff;"></div>
<svg class="a" style="left:1239px;top:1040.5px;" width="17" height="17" viewBox="0 0 24 24"><path d="M16.59 8.59L12 13.17 7.41 8.59 6 10l6 6 6-6z" fill="#333"/></svg>
<div class="t" style="left:1264px;top:1042.75px;font-size:14px;line-height:14px;color:#333;-webkit-text-stroke:0.45px #333;letter-spacing:0.69px;">Link to</div>
<div class="a" style="left:251px;top:185px;width:1px;height:906px;background:#e2e2e2;"></div>
<div class="a" style="left:31px;top:1091px;width:1676px;height:1px;background:#e2e2e2;"></div>
<div class="t" style="left:50px;top:1113.53px;font-size:16.5px;line-height:16.5px;font-weight:normal;color:#2a2a2a;letter-spacing:0.1px;-webkit-text-stroke:0.2px #2a2a2a;-webkit-text-stroke:0;">4 rows selected</div>
<div class="t" style="left:1512.5px;top:1114.11px;font-size:17px;line-height:17px;font-weight:normal;color:#2a2a2a;letter-spacing:0.1px;-webkit-text-stroke:0.2px #2a2a2a;-webkit-text-stroke:0;">1–20 of 212</div>
<svg class="a" style="left:1631.3px;top:1108px;" width="28" height="28" viewBox="0 0 24 24"><path d="M15.41 7.41L14 6l-6 6 6 6 1.41-1.41L10.83 12z" fill="#bdbdbd"/></svg>
<svg class="a" style="left:1670.5px;top:1108px;" width="28" height="28" viewBox="0 0 24 24"><path d="M10 6L8.59 7.41 13.17 12l-4.58 4.59L10 18l6-6z" fill="#222"/></svg>
</body></html>
